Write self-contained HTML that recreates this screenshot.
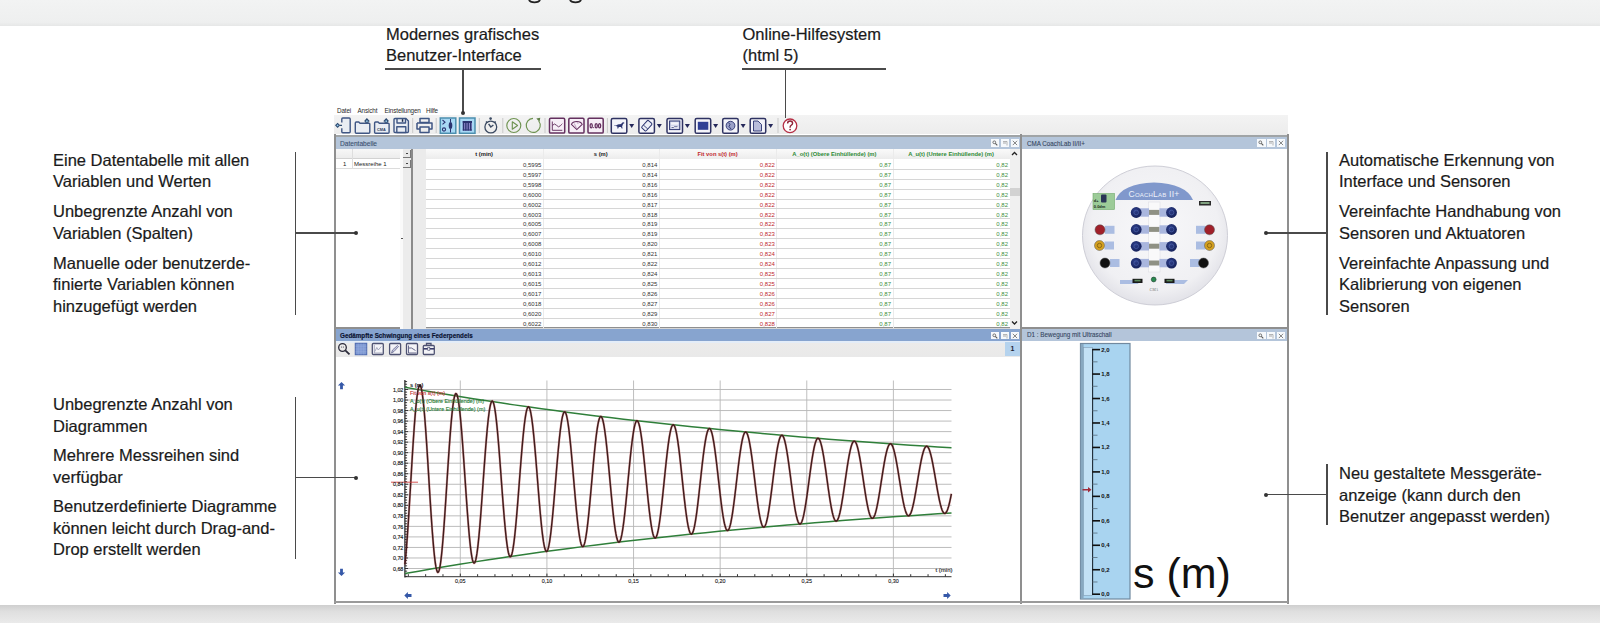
<!DOCTYPE html>
<html><head><meta charset="utf-8"><style>
*{margin:0;padding:0;box-sizing:border-box}
html,body{width:1600px;height:623px;overflow:hidden;background:#fff;font-family:"Liberation Sans", sans-serif}
.a{position:absolute}
.t{position:absolute;white-space:nowrap;font-size:16.5px;color:#1a1a1a;line-height:21.5px;-webkit-text-stroke:0.2px #1a1a1a}
.ln{position:absolute;background:#4a4a4a}
.dot{position:absolute;width:4px;height:4px;border-radius:2px;background:#333}
.s{position:absolute;white-space:nowrap;line-height:1}
</style></head><body>
<div class="a" style="left:0;top:0;width:1600px;height:26px;background:linear-gradient(#f2f3f3,#eeefef 85%,#e6e7e7)"></div><svg class="a" style="left:0;top:0" width="600" height="6"><path d="M529 0 Q530 2.3 534.5 2.3 Q539 2.3 540 0" fill="none" stroke="#222" stroke-width="1.8"/><path d="M570 0 Q571 2.3 575.5 2.3 Q580 2.3 581 0" fill="none" stroke="#222" stroke-width="1.8"/></svg><div class="a" style="left:0;top:604.5px;width:1600px;height:19px;background:linear-gradient(#cfcfcf,#dfdfdf 35%,#ebebeb)"></div><div class="t" style="left:53px;top:149.9px">Eine Datentabelle mit allen</div><div class="t" style="left:53px;top:171.4px">Variablen und Werten</div><div class="t" style="left:53px;top:201.2px">Unbegrenzte Anzahl von</div><div class="t" style="left:53px;top:222.7px">Variablen (Spalten)</div><div class="t" style="left:53px;top:252.6px">Manuelle oder benutzerde-</div><div class="t" style="left:53px;top:274.1px">finierte Variablen können</div><div class="t" style="left:53px;top:295.6px">hinzugefügt werden</div><div class="t" style="left:53px;top:394.2px">Unbegrenzte Anzahl von</div><div class="t" style="left:53px;top:415.7px">Diagrammen</div><div class="t" style="left:53px;top:445.4px">Mehrere Messreihen sind</div><div class="t" style="left:53px;top:466.9px">verfügbar</div><div class="t" style="left:53px;top:496.4px">Benutzerdefinierte Diagramme</div><div class="t" style="left:53px;top:517.9px">können leicht durch Drag-and-</div><div class="t" style="left:53px;top:539.4px">Drop erstellt werden</div><div class="t" style="left:1339px;top:149.9px">Automatische Erkennung von</div><div class="t" style="left:1339px;top:171.4px">Interface und Sensoren</div><div class="t" style="left:1339px;top:201.2px">Vereinfachte Handhabung von</div><div class="t" style="left:1339px;top:222.7px">Sensoren und Aktuatoren</div><div class="t" style="left:1339px;top:252.6px">Vereinfachte Anpassung und</div><div class="t" style="left:1339px;top:274.1px">Kalibrierung von eigenen</div><div class="t" style="left:1339px;top:295.6px">Sensoren</div><div class="t" style="left:1339px;top:463.2px">Neu gestaltete Messgeräte-</div><div class="t" style="left:1339px;top:484.7px">anzeige (kann durch den</div><div class="t" style="left:1339px;top:506.2px">Benutzer angepasst werden)</div><div class="t" style="left:386px;top:23.5px">Modernes grafisches</div><div class="t" style="left:386px;top:45.0px">Benutzer-Interface</div><div class="t" style="left:742.5px;top:23.5px">Online-Hilfesystem</div><div class="t" style="left:742.5px;top:45.0px">(html 5)</div>
<div class="s" style="left:337px;top:107.7px;font-size:6.3px;color:#2a2a2a;letter-spacing:-0.12px">Datei</div><div class="s" style="left:357.5px;top:107.7px;font-size:6.3px;color:#2a2a2a;letter-spacing:-0.12px">Ansicht</div><div class="s" style="left:384.5px;top:107.7px;font-size:6.3px;color:#2a2a2a;letter-spacing:-0.12px">Einstellungen</div><div class="s" style="left:426px;top:107.7px;font-size:6.3px;color:#2a2a2a;letter-spacing:-0.12px">Hilfe</div><div class="a" style="left:334px;top:115px;width:954px;height:20px;background:linear-gradient(#f3f3f3,#ececec);"></div><div class="a" style="left:334px;top:134px;width:688px;height:195px;background:#fff;"></div><div class="a" style="left:334px;top:134.5px;width:954px;height:2.3px;background:#a0a4a6;"></div><div class="a" style="left:334px;top:134px;width:2px;height:470px;background:#8f8f8f;"></div><div class="a" style="left:1020px;top:134px;width:2px;height:470px;background:#8f8f8f;"></div><div class="a" style="left:1286.5px;top:134px;width:2px;height:470px;background:#8f8f8f;"></div><div class="a" style="left:334px;top:327px;width:954px;height:2px;background:#8f8f8f;"></div><div class="a" style="left:334px;top:601.3px;width:954px;height:2.2px;background:#9a9a9a;"></div><div class="a" style="left:336px;top:137px;width:684px;height:11.5px;background:#b4c5da;"></div><div class="s" style="left:340px;top:140.5px;font-size:6.6px;color:#3a5070;-webkit-text-stroke:0.1px #3a5070">Datentabelle</div><div class="a" style="left:1022px;top:137px;width:264.5px;height:11.5px;background:#b4c5da;"></div><div class="s" style="left:1027px;top:140.5px;font-size:6.6px;color:#34465f;transform:scaleX(0.95);transform-origin:0 0;-webkit-text-stroke:0.1px #34465f">CMA CoachLab II/II+</div><div class="a" style="left:336px;top:329px;width:684px;height:11.5px;background:#87a4cf;"></div><div class="s" style="left:340px;top:332px;font-size:7px;color:#0a1230;font-weight:bold;-webkit-text-stroke:0.15px #0a1230;transform:scaleX(0.9);transform-origin:0 0">Gedämpfte Schwingung eines Federpendels</div><div class="a" style="left:1022px;top:329px;width:264.5px;height:11.5px;background:#b4c5da;"></div><div class="s" style="left:1026.5px;top:332px;font-size:6.8px;color:#34465f;transform:scaleX(0.93);transform-origin:0 0;-webkit-text-stroke:0.1px #34465f">D1 : Bewegung mit Ultraschall</div><div class="a" style="left:991px;top:139px;width:8.3px;height:7.8px;background:#f6f9fc;"></div><div class="a" style="left:1000.8px;top:139px;width:8.3px;height:7.8px;background:#f6f9fc;"></div><div class="a" style="left:1010.8px;top:139px;width:8.3px;height:7.8px;background:#f6f9fc;"></div><svg class="a" style="left:991px;top:139px" width="29" height="8" viewBox="0 0 29 8"><circle cx="3.3" cy="3.3" r="1.4" fill="none" stroke="#666" stroke-width="0.9"/><line x1="4.3" y1="4.3" x2="6.3" y2="6.3" stroke="#555" stroke-width="1.1"/><path d="M12 2.5 h4 v4" fill="none" stroke="#999" stroke-width="0.7"/><line x1="12" y1="4" x2="15" y2="4" stroke="#888" stroke-width="0.7"/><path d="M21.8 1.8 l4.3 4.3 M26.1 1.8 l-4.3 4.3" stroke="#777" stroke-width="0.9"/></svg><div class="a" style="left:1257.3px;top:139px;width:8.3px;height:7.8px;background:#f6f9fc;"></div><div class="a" style="left:1267.1px;top:139px;width:8.3px;height:7.8px;background:#f6f9fc;"></div><div class="a" style="left:1277.1px;top:139px;width:8.3px;height:7.8px;background:#f6f9fc;"></div><svg class="a" style="left:1257.3px;top:139px" width="29" height="8" viewBox="0 0 29 8"><circle cx="3.3" cy="3.3" r="1.4" fill="none" stroke="#666" stroke-width="0.9"/><line x1="4.3" y1="4.3" x2="6.3" y2="6.3" stroke="#555" stroke-width="1.1"/><path d="M12 2.5 h4 v4" fill="none" stroke="#999" stroke-width="0.7"/><line x1="12" y1="4" x2="15" y2="4" stroke="#888" stroke-width="0.7"/><path d="M21.8 1.8 l4.3 4.3 M26.1 1.8 l-4.3 4.3" stroke="#777" stroke-width="0.9"/></svg><div class="a" style="left:991px;top:331.5px;width:8.3px;height:7.8px;background:#f6f9fc;"></div><div class="a" style="left:1000.8px;top:331.5px;width:8.3px;height:7.8px;background:#f6f9fc;"></div><div class="a" style="left:1010.8px;top:331.5px;width:8.3px;height:7.8px;background:#f6f9fc;"></div><svg class="a" style="left:991px;top:331.5px" width="29" height="8" viewBox="0 0 29 8"><circle cx="3.3" cy="3.3" r="1.4" fill="none" stroke="#666" stroke-width="0.9"/><line x1="4.3" y1="4.3" x2="6.3" y2="6.3" stroke="#555" stroke-width="1.1"/><path d="M12 2.5 h4 v4" fill="none" stroke="#999" stroke-width="0.7"/><line x1="12" y1="4" x2="15" y2="4" stroke="#888" stroke-width="0.7"/><path d="M21.8 1.8 l4.3 4.3 M26.1 1.8 l-4.3 4.3" stroke="#777" stroke-width="0.9"/></svg><div class="a" style="left:1257.3px;top:331.5px;width:8.3px;height:7.8px;background:#f6f9fc;"></div><div class="a" style="left:1267.1px;top:331.5px;width:8.3px;height:7.8px;background:#f6f9fc;"></div><div class="a" style="left:1277.1px;top:331.5px;width:8.3px;height:7.8px;background:#f6f9fc;"></div><svg class="a" style="left:1257.3px;top:331.5px" width="29" height="8" viewBox="0 0 29 8"><circle cx="3.3" cy="3.3" r="1.4" fill="none" stroke="#666" stroke-width="0.9"/><line x1="4.3" y1="4.3" x2="6.3" y2="6.3" stroke="#555" stroke-width="1.1"/><path d="M12 2.5 h4 v4" fill="none" stroke="#999" stroke-width="0.7"/><line x1="12" y1="4" x2="15" y2="4" stroke="#888" stroke-width="0.7"/><path d="M21.8 1.8 l4.3 4.3 M26.1 1.8 l-4.3 4.3" stroke="#777" stroke-width="0.9"/></svg><div class="a" style="left:336px;top:148.5px;width:64.5px;height:10px;background:linear-gradient(#f7f7f7,#ebebeb);"></div><div class="a" style="left:336px;top:158.5px;width:64.5px;height:10px;background:#fff;"></div><div class="a" style="left:336px;top:168.3px;width:64.5px;height:0.8px;background:#dcdcdc;"></div><div class="a" style="left:336px;top:158.2px;width:64.5px;height:0.8px;background:#d2d2d2;"></div><div class="a" style="left:352.3px;top:148.5px;width:0.8px;height:20px;background:#dedede;"></div><div class="s" style="left:343px;top:160.8px;font-size:6px;color:#1a1a1a;">1</div><div class="s" style="left:354px;top:160.8px;font-size:6px;color:#1a1a1a;">Messreihe 1</div><div class="a" style="left:400.5px;top:148.5px;width:11px;height:180px;background:#ececec;"></div><div class="a" style="left:400.3px;top:148.5px;width:2.8px;height:180px;background:#fafafa;"></div><div class="a" style="left:403.2px;top:149.5px;width:7.5px;height:8.5px;background:#e8e8e8;border-right:1px solid #777;border-bottom:1px solid #777"></div><div class="a" style="left:403.2px;top:159.5px;width:7.5px;height:8.5px;background:#e8e8e8;border-right:1px solid #777;border-bottom:1px solid #777"></div><div class="a" style="left:405.8px;top:153.2px;width:2px;height:0.9px;background:#444;"></div><div class="a" style="left:405.8px;top:163.2px;width:2px;height:0.9px;background:#444;"></div><div class="a" style="left:411px;top:148.5px;width:1.8px;height:180px;background:#8a8a8a;"></div><div class="a" style="left:412.8px;top:148.5px;width:12.8px;height:180px;background:#ebebeb;"></div><div class="a" style="left:401px;top:237.5px;width:1.6px;height:1.6px;background:#555;"></div><div class="a" style="left:425.6px;top:148.5px;width:584px;height:10px;background:linear-gradient(#fafafa,#ececec);"></div><div class="s" style="left:384.2px;width:200px;text-align:center;top:152.3px;font-size:5.8px;color:#222;font-weight:bold">t (min)</div><div class="s" style="left:500.79999999999995px;width:200px;text-align:center;top:152.3px;font-size:5.8px;color:#222;font-weight:bold">s (m)</div><div class="s" style="left:617.55px;width:200px;text-align:center;top:152.3px;font-size:5.8px;color:#c0282d;font-weight:bold">Fit von s(t) (m)</div><div class="s" style="left:734.4px;width:200px;text-align:center;top:152.3px;font-size:5.8px;color:#2e8a35;font-weight:bold">A_o(t) (Obere Einhüllende) (m)</div><div class="s" style="left:851.0px;width:200px;text-align:center;top:152.3px;font-size:5.8px;color:#2e8a35;font-weight:bold">A_u(t) (Untere Einhüllende) (m)</div><div class="a" style="left:542.8px;top:148.5px;width:0.8px;height:180px;background:#ebebeb;"></div><div class="a" style="left:658.8px;top:148.5px;width:0.8px;height:180px;background:#ebebeb;"></div><div class="a" style="left:776.3px;top:148.5px;width:0.8px;height:180px;background:#ebebeb;"></div><div class="a" style="left:892.5px;top:148.5px;width:0.8px;height:180px;background:#ebebeb;"></div><div class="a" style="left:425.6px;top:168.7px;width:584px;height:0.9px;background:#d6d6d6;"></div><div class="s" style="right:1058.7px;top:161.8px;font-size:6px;color:#333;">0,5995</div><div class="s" style="right:942.7px;top:161.8px;font-size:6px;color:#333;">0,814</div><div class="s" style="right:825.2px;top:161.8px;font-size:6px;color:#c0282d;">0,822</div><div class="s" style="right:709.0px;top:161.8px;font-size:6px;color:#3d8f3d;">0,87</div><div class="s" style="right:592.0px;top:161.8px;font-size:6px;color:#3d8f3d;">0,82</div><div class="a" style="left:425.6px;top:178.64px;width:584px;height:0.9px;background:#d6d6d6;"></div><div class="s" style="right:1058.7px;top:171.74px;font-size:6px;color:#333;">0,5997</div><div class="s" style="right:942.7px;top:171.74px;font-size:6px;color:#333;">0,814</div><div class="s" style="right:825.2px;top:171.74px;font-size:6px;color:#c0282d;">0,822</div><div class="s" style="right:709.0px;top:171.74px;font-size:6px;color:#3d8f3d;">0,87</div><div class="s" style="right:592.0px;top:171.74px;font-size:6px;color:#3d8f3d;">0,82</div><div class="a" style="left:425.6px;top:188.57999999999998px;width:584px;height:0.9px;background:#d6d6d6;"></div><div class="s" style="right:1058.7px;top:181.68px;font-size:6px;color:#333;">0,5998</div><div class="s" style="right:942.7px;top:181.68px;font-size:6px;color:#333;">0,816</div><div class="s" style="right:825.2px;top:181.68px;font-size:6px;color:#c0282d;">0,822</div><div class="s" style="right:709.0px;top:181.68px;font-size:6px;color:#3d8f3d;">0,87</div><div class="s" style="right:592.0px;top:181.68px;font-size:6px;color:#3d8f3d;">0,82</div><div class="a" style="left:425.6px;top:198.51999999999998px;width:584px;height:0.9px;background:#d6d6d6;"></div><div class="s" style="right:1058.7px;top:191.62px;font-size:6px;color:#333;">0,6000</div><div class="s" style="right:942.7px;top:191.62px;font-size:6px;color:#333;">0,816</div><div class="s" style="right:825.2px;top:191.62px;font-size:6px;color:#c0282d;">0,822</div><div class="s" style="right:709.0px;top:191.62px;font-size:6px;color:#3d8f3d;">0,87</div><div class="s" style="right:592.0px;top:191.62px;font-size:6px;color:#3d8f3d;">0,82</div><div class="a" style="left:425.6px;top:208.45999999999998px;width:584px;height:0.9px;background:#d6d6d6;"></div><div class="s" style="right:1058.7px;top:201.56px;font-size:6px;color:#333;">0,6002</div><div class="s" style="right:942.7px;top:201.56px;font-size:6px;color:#333;">0,817</div><div class="s" style="right:825.2px;top:201.56px;font-size:6px;color:#c0282d;">0,822</div><div class="s" style="right:709.0px;top:201.56px;font-size:6px;color:#3d8f3d;">0,87</div><div class="s" style="right:592.0px;top:201.56px;font-size:6px;color:#3d8f3d;">0,82</div><div class="a" style="left:425.6px;top:218.39999999999998px;width:584px;height:0.9px;background:#d6d6d6;"></div><div class="s" style="right:1058.7px;top:211.5px;font-size:6px;color:#333;">0,6003</div><div class="s" style="right:942.7px;top:211.5px;font-size:6px;color:#333;">0,818</div><div class="s" style="right:825.2px;top:211.5px;font-size:6px;color:#c0282d;">0,822</div><div class="s" style="right:709.0px;top:211.5px;font-size:6px;color:#3d8f3d;">0,87</div><div class="s" style="right:592.0px;top:211.5px;font-size:6px;color:#3d8f3d;">0,82</div><div class="a" style="left:425.6px;top:228.33999999999997px;width:584px;height:0.9px;background:#d6d6d6;"></div><div class="s" style="right:1058.7px;top:221.44px;font-size:6px;color:#333;">0,6005</div><div class="s" style="right:942.7px;top:221.44px;font-size:6px;color:#333;">0,819</div><div class="s" style="right:825.2px;top:221.44px;font-size:6px;color:#c0282d;">0,822</div><div class="s" style="right:709.0px;top:221.44px;font-size:6px;color:#3d8f3d;">0,87</div><div class="s" style="right:592.0px;top:221.44px;font-size:6px;color:#3d8f3d;">0,82</div><div class="a" style="left:425.6px;top:238.27999999999997px;width:584px;height:0.9px;background:#d6d6d6;"></div><div class="s" style="right:1058.7px;top:231.38px;font-size:6px;color:#333;">0,6007</div><div class="s" style="right:942.7px;top:231.38px;font-size:6px;color:#333;">0,819</div><div class="s" style="right:825.2px;top:231.38px;font-size:6px;color:#c0282d;">0,823</div><div class="s" style="right:709.0px;top:231.38px;font-size:6px;color:#3d8f3d;">0,87</div><div class="s" style="right:592.0px;top:231.38px;font-size:6px;color:#3d8f3d;">0,82</div><div class="a" style="left:425.6px;top:248.21999999999997px;width:584px;height:0.9px;background:#d6d6d6;"></div><div class="s" style="right:1058.7px;top:241.32px;font-size:6px;color:#333;">0,6008</div><div class="s" style="right:942.7px;top:241.32px;font-size:6px;color:#333;">0,820</div><div class="s" style="right:825.2px;top:241.32px;font-size:6px;color:#c0282d;">0,823</div><div class="s" style="right:709.0px;top:241.32px;font-size:6px;color:#3d8f3d;">0,87</div><div class="s" style="right:592.0px;top:241.32px;font-size:6px;color:#3d8f3d;">0,82</div><div class="a" style="left:425.6px;top:258.15999999999997px;width:584px;height:0.9px;background:#d6d6d6;"></div><div class="s" style="right:1058.7px;top:251.26px;font-size:6px;color:#333;">0,6010</div><div class="s" style="right:942.7px;top:251.26px;font-size:6px;color:#333;">0,821</div><div class="s" style="right:825.2px;top:251.26px;font-size:6px;color:#c0282d;">0,824</div><div class="s" style="right:709.0px;top:251.26px;font-size:6px;color:#3d8f3d;">0,87</div><div class="s" style="right:592.0px;top:251.26px;font-size:6px;color:#3d8f3d;">0,82</div><div class="a" style="left:425.6px;top:268.09999999999997px;width:584px;height:0.9px;background:#d6d6d6;"></div><div class="s" style="right:1058.7px;top:261.2px;font-size:6px;color:#333;">0,6012</div><div class="s" style="right:942.7px;top:261.2px;font-size:6px;color:#333;">0,822</div><div class="s" style="right:825.2px;top:261.2px;font-size:6px;color:#c0282d;">0,824</div><div class="s" style="right:709.0px;top:261.2px;font-size:6px;color:#3d8f3d;">0,87</div><div class="s" style="right:592.0px;top:261.2px;font-size:6px;color:#3d8f3d;">0,82</div><div class="a" style="left:425.6px;top:278.03999999999996px;width:584px;height:0.9px;background:#d6d6d6;"></div><div class="s" style="right:1058.7px;top:271.14px;font-size:6px;color:#333;">0,6013</div><div class="s" style="right:942.7px;top:271.14px;font-size:6px;color:#333;">0,824</div><div class="s" style="right:825.2px;top:271.14px;font-size:6px;color:#c0282d;">0,825</div><div class="s" style="right:709.0px;top:271.14px;font-size:6px;color:#3d8f3d;">0,87</div><div class="s" style="right:592.0px;top:271.14px;font-size:6px;color:#3d8f3d;">0,82</div><div class="a" style="left:425.6px;top:287.97999999999996px;width:584px;height:0.9px;background:#d6d6d6;"></div><div class="s" style="right:1058.7px;top:281.08px;font-size:6px;color:#333;">0,6015</div><div class="s" style="right:942.7px;top:281.08px;font-size:6px;color:#333;">0,825</div><div class="s" style="right:825.2px;top:281.08px;font-size:6px;color:#c0282d;">0,825</div><div class="s" style="right:709.0px;top:281.08px;font-size:6px;color:#3d8f3d;">0,87</div><div class="s" style="right:592.0px;top:281.08px;font-size:6px;color:#3d8f3d;">0,82</div><div class="a" style="left:425.6px;top:297.92px;width:584px;height:0.9px;background:#d6d6d6;"></div><div class="s" style="right:1058.7px;top:291.02000000000004px;font-size:6px;color:#333;">0,6017</div><div class="s" style="right:942.7px;top:291.02000000000004px;font-size:6px;color:#333;">0,826</div><div class="s" style="right:825.2px;top:291.02000000000004px;font-size:6px;color:#c0282d;">0,826</div><div class="s" style="right:709.0px;top:291.02000000000004px;font-size:6px;color:#3d8f3d;">0,87</div><div class="s" style="right:592.0px;top:291.02000000000004px;font-size:6px;color:#3d8f3d;">0,82</div><div class="a" style="left:425.6px;top:307.85999999999996px;width:584px;height:0.9px;background:#d6d6d6;"></div><div class="s" style="right:1058.7px;top:300.96px;font-size:6px;color:#333;">0,6018</div><div class="s" style="right:942.7px;top:300.96px;font-size:6px;color:#333;">0,827</div><div class="s" style="right:825.2px;top:300.96px;font-size:6px;color:#c0282d;">0,826</div><div class="s" style="right:709.0px;top:300.96px;font-size:6px;color:#3d8f3d;">0,87</div><div class="s" style="right:592.0px;top:300.96px;font-size:6px;color:#3d8f3d;">0,82</div><div class="a" style="left:425.6px;top:317.8px;width:584px;height:0.9px;background:#d6d6d6;"></div><div class="s" style="right:1058.7px;top:310.90000000000003px;font-size:6px;color:#333;">0,6020</div><div class="s" style="right:942.7px;top:310.90000000000003px;font-size:6px;color:#333;">0,829</div><div class="s" style="right:825.2px;top:310.90000000000003px;font-size:6px;color:#c0282d;">0,827</div><div class="s" style="right:709.0px;top:310.90000000000003px;font-size:6px;color:#3d8f3d;">0,87</div><div class="s" style="right:592.0px;top:310.90000000000003px;font-size:6px;color:#3d8f3d;">0,82</div><div class="a" style="left:425.6px;top:327.73999999999995px;width:584px;height:0.9px;background:#d6d6d6;"></div><div class="s" style="right:1058.7px;top:320.84px;font-size:6px;color:#333;">0,6022</div><div class="s" style="right:942.7px;top:320.84px;font-size:6px;color:#333;">0,830</div><div class="s" style="right:825.2px;top:320.84px;font-size:6px;color:#c0282d;">0,828</div><div class="s" style="right:709.0px;top:320.84px;font-size:6px;color:#3d8f3d;">0,87</div><div class="s" style="right:592.0px;top:320.84px;font-size:6px;color:#3d8f3d;">0,82</div><div class="a" style="left:1009.5px;top:148.5px;width:10.5px;height:180px;background:#f0f0f0;"></div><div class="a" style="left:1009.5px;top:188px;width:10.5px;height:7.5px;background:#d2d2d2;"></div><svg class="a" style="left:1009px;top:148px" width="12" height="182" viewBox="0 0 12 182"><path d="M3 7 l2.5 -2.5 l2.5 2.5" fill="none" stroke="#222" stroke-width="1.3"/><path d="M3 173.5 l2.5 2.5 l2.5 -2.5" fill="none" stroke="#222" stroke-width="1.3"/></svg><div class="a" style="left:336px;top:340.5px;width:684px;height:16.3px;background:linear-gradient(#e4edf8 0,#e4edf8 1.5px,#ecebea 2px,#e9e9e9)"></div><div class="a" style="left:1005px;top:342px;width:14.5px;height:14px;background:#b5d3ee"></div><div class="s" style="left:1010.5px;top:345px;font-size:7px;color:#223;font-weight:bold">1</div><svg class="a" style="left:0;top:0" width="1600" height="623" viewBox="0 0 1600 623"><g fill="none" stroke="#4e5272" stroke-width="1.3"><circle cx="342.5" cy="347.5" r="3.8" stroke="#2a2a3a"/><line x1="345.3" y1="350.3" x2="349.5" y2="354.3" stroke-width="1.8" stroke="#2a2a3a"/><circle cx="341.6" cy="347" r="0.5" fill="#2a2a3a" stroke="none"/><circle cx="343.4" cy="347" r="0.5" fill="#2a2a3a" stroke="none"/><rect x="355.3" y="343.3" width="11.4" height="11.4" fill="#7e98d2" stroke="#4f6cb0" stroke-width="1.1"/><path d="M358.2 343.5 v11 M361 343.5 v11 M363.8 343.5 v11 M355.5 346.2 h11 M355.5 349 h11 M355.5 351.8 h11" stroke="#98aee0" stroke-width="0.5"/><rect x="372.3" y="343.5" width="11" height="11" rx="1" fill="#f4f4f8"/><rect x="389.6" y="343.5" width="11" height="11" rx="1" fill="#f4f4f8"/><rect x="406.5" y="343.5" width="11" height="11" rx="1" fill="#f4f4f8"/><path d="M374.3 345 v8 h8.5 M374.8 351.5 l2 -4 l1.5 2.5 l3 -3.5" stroke-width="0.7" stroke="#8a8ca8"/><path d="M391.5 353 l1 -3 l5 -4.5 l1 1 l-4.5 5 z" stroke-width="0.8" stroke="#6a6c90" fill="#c8cae0"/><path d="M408.5 345.5 v7.5 h8 M409 348 h2.5 l4 2.5" stroke-width="0.9" stroke="#5a5c80"/><rect x="423.3" y="345.5" width="11" height="9" rx="1" fill="#f4f4f8"/><path d="M426.5 345.5 v-2 h4.5 v2" /><line x1="423.3" y1="348.8" x2="434.3" y2="348.8" stroke-width="1.6" stroke="#3a3c6a"/><rect x="427.8" y="347.5" width="2" height="3" fill="#f4f4f8" stroke-width="0.6"/></g><path d="M341.5 382 l-3.6 3.6 h2.2 v3.6 h2.8 v-3.6 h2.2 z" fill="#3558a8"/><path d="M341.5 576 l-3.6 -3.6 h2.2 v-3.6 h2.8 v3.6 h2.2 z" fill="#3558a8"/><path d="M404.3 595.5 l3.6 -3.6 v2.2 h3.6 v2.8 h-3.6 v2.2 z" fill="#3558a8"/><path d="M950.7 595.5 l-3.6 -3.6 v2.2 h-3.6 v2.8 h3.6 v2.2 z" fill="#3558a8"/><line x1="404.9" y1="568.50" x2="951.5" y2="568.50" stroke="#bcbcbc" stroke-width="1"/><line x1="404.9" y1="557.97" x2="951.5" y2="557.97" stroke="#bcbcbc" stroke-width="1"/><line x1="404.9" y1="547.44" x2="951.5" y2="547.44" stroke="#bcbcbc" stroke-width="1"/><line x1="404.9" y1="536.91" x2="951.5" y2="536.91" stroke="#bcbcbc" stroke-width="1"/><line x1="404.9" y1="526.38" x2="951.5" y2="526.38" stroke="#bcbcbc" stroke-width="1"/><line x1="404.9" y1="515.85" x2="951.5" y2="515.85" stroke="#bcbcbc" stroke-width="1"/><line x1="404.9" y1="505.32" x2="951.5" y2="505.32" stroke="#bcbcbc" stroke-width="1"/><line x1="404.9" y1="494.79" x2="951.5" y2="494.79" stroke="#bcbcbc" stroke-width="1"/><line x1="404.9" y1="484.26" x2="951.5" y2="484.26" stroke="#bcbcbc" stroke-width="1"/><line x1="404.9" y1="473.73" x2="951.5" y2="473.73" stroke="#bcbcbc" stroke-width="1"/><line x1="404.9" y1="463.20" x2="951.5" y2="463.20" stroke="#bcbcbc" stroke-width="1"/><line x1="404.9" y1="452.67" x2="951.5" y2="452.67" stroke="#bcbcbc" stroke-width="1"/><line x1="404.9" y1="442.14" x2="951.5" y2="442.14" stroke="#bcbcbc" stroke-width="1"/><line x1="404.9" y1="431.61" x2="951.5" y2="431.61" stroke="#bcbcbc" stroke-width="1"/><line x1="404.9" y1="421.08" x2="951.5" y2="421.08" stroke="#bcbcbc" stroke-width="1"/><line x1="404.9" y1="410.55" x2="951.5" y2="410.55" stroke="#bcbcbc" stroke-width="1"/><line x1="404.9" y1="400.02" x2="951.5" y2="400.02" stroke="#bcbcbc" stroke-width="1"/><line x1="404.9" y1="389.49" x2="951.5" y2="389.49" stroke="#bcbcbc" stroke-width="1"/><line x1="460.30" y1="380.5" x2="460.30" y2="576.6" stroke="#b8b8b8" stroke-width="0.9"/><line x1="546.92" y1="380.5" x2="546.92" y2="576.6" stroke="#b8b8b8" stroke-width="0.9"/><line x1="633.54" y1="380.5" x2="633.54" y2="576.6" stroke="#b8b8b8" stroke-width="0.9"/><line x1="720.16" y1="380.5" x2="720.16" y2="576.6" stroke="#b8b8b8" stroke-width="0.9"/><line x1="806.78" y1="380.5" x2="806.78" y2="576.6" stroke="#b8b8b8" stroke-width="0.9"/><line x1="893.40" y1="380.5" x2="893.40" y2="576.6" stroke="#b8b8b8" stroke-width="0.9"/><line x1="404.9" y1="380" x2="404.9" y2="577.6" stroke="#222" stroke-width="1.2"/><line x1="404.9" y1="576.6" x2="951.5" y2="576.6" stroke="#5a5a5a" stroke-width="1.3"/><line x1="404.9" y1="576.40" x2="407.1" y2="576.40" stroke="#222" stroke-width="0.9"/><line x1="404.9" y1="573.76" x2="407.1" y2="573.76" stroke="#222" stroke-width="0.9"/><line x1="404.9" y1="571.13" x2="407.1" y2="571.13" stroke="#222" stroke-width="0.9"/><line x1="404.9" y1="568.50" x2="408.1" y2="568.50" stroke="#222" stroke-width="0.9"/><line x1="404.9" y1="565.87" x2="407.1" y2="565.87" stroke="#222" stroke-width="0.9"/><line x1="404.9" y1="563.24" x2="407.1" y2="563.24" stroke="#222" stroke-width="0.9"/><line x1="404.9" y1="560.60" x2="407.1" y2="560.60" stroke="#222" stroke-width="0.9"/><line x1="404.9" y1="557.97" x2="408.1" y2="557.97" stroke="#222" stroke-width="0.9"/><line x1="404.9" y1="555.34" x2="407.1" y2="555.34" stroke="#222" stroke-width="0.9"/><line x1="404.9" y1="552.71" x2="407.1" y2="552.71" stroke="#222" stroke-width="0.9"/><line x1="404.9" y1="550.07" x2="407.1" y2="550.07" stroke="#222" stroke-width="0.9"/><line x1="404.9" y1="547.44" x2="408.1" y2="547.44" stroke="#222" stroke-width="0.9"/><line x1="404.9" y1="544.81" x2="407.1" y2="544.81" stroke="#222" stroke-width="0.9"/><line x1="404.9" y1="542.17" x2="407.1" y2="542.17" stroke="#222" stroke-width="0.9"/><line x1="404.9" y1="539.54" x2="407.1" y2="539.54" stroke="#222" stroke-width="0.9"/><line x1="404.9" y1="536.91" x2="408.1" y2="536.91" stroke="#222" stroke-width="0.9"/><line x1="404.9" y1="534.28" x2="407.1" y2="534.28" stroke="#222" stroke-width="0.9"/><line x1="404.9" y1="531.64" x2="407.1" y2="531.64" stroke="#222" stroke-width="0.9"/><line x1="404.9" y1="529.01" x2="407.1" y2="529.01" stroke="#222" stroke-width="0.9"/><line x1="404.9" y1="526.38" x2="408.1" y2="526.38" stroke="#222" stroke-width="0.9"/><line x1="404.9" y1="523.75" x2="407.1" y2="523.75" stroke="#222" stroke-width="0.9"/><line x1="404.9" y1="521.12" x2="407.1" y2="521.12" stroke="#222" stroke-width="0.9"/><line x1="404.9" y1="518.48" x2="407.1" y2="518.48" stroke="#222" stroke-width="0.9"/><line x1="404.9" y1="515.85" x2="408.1" y2="515.85" stroke="#222" stroke-width="0.9"/><line x1="404.9" y1="513.22" x2="407.1" y2="513.22" stroke="#222" stroke-width="0.9"/><line x1="404.9" y1="510.58" x2="407.1" y2="510.58" stroke="#222" stroke-width="0.9"/><line x1="404.9" y1="507.95" x2="407.1" y2="507.95" stroke="#222" stroke-width="0.9"/><line x1="404.9" y1="505.32" x2="408.1" y2="505.32" stroke="#222" stroke-width="0.9"/><line x1="404.9" y1="502.69" x2="407.1" y2="502.69" stroke="#222" stroke-width="0.9"/><line x1="404.9" y1="500.05" x2="407.1" y2="500.05" stroke="#222" stroke-width="0.9"/><line x1="404.9" y1="497.42" x2="407.1" y2="497.42" stroke="#222" stroke-width="0.9"/><line x1="404.9" y1="494.79" x2="408.1" y2="494.79" stroke="#222" stroke-width="0.9"/><line x1="404.9" y1="492.16" x2="407.1" y2="492.16" stroke="#222" stroke-width="0.9"/><line x1="404.9" y1="489.52" x2="407.1" y2="489.52" stroke="#222" stroke-width="0.9"/><line x1="404.9" y1="486.89" x2="407.1" y2="486.89" stroke="#222" stroke-width="0.9"/><line x1="404.9" y1="484.26" x2="408.1" y2="484.26" stroke="#222" stroke-width="0.9"/><line x1="404.9" y1="481.63" x2="407.1" y2="481.63" stroke="#222" stroke-width="0.9"/><line x1="404.9" y1="478.99" x2="407.1" y2="478.99" stroke="#222" stroke-width="0.9"/><line x1="404.9" y1="476.36" x2="407.1" y2="476.36" stroke="#222" stroke-width="0.9"/><line x1="404.9" y1="473.73" x2="408.1" y2="473.73" stroke="#222" stroke-width="0.9"/><line x1="404.9" y1="471.10" x2="407.1" y2="471.10" stroke="#222" stroke-width="0.9"/><line x1="404.9" y1="468.46" x2="407.1" y2="468.46" stroke="#222" stroke-width="0.9"/><line x1="404.9" y1="465.83" x2="407.1" y2="465.83" stroke="#222" stroke-width="0.9"/><line x1="404.9" y1="463.20" x2="408.1" y2="463.20" stroke="#222" stroke-width="0.9"/><line x1="404.9" y1="460.57" x2="407.1" y2="460.57" stroke="#222" stroke-width="0.9"/><line x1="404.9" y1="457.93" x2="407.1" y2="457.93" stroke="#222" stroke-width="0.9"/><line x1="404.9" y1="455.30" x2="407.1" y2="455.30" stroke="#222" stroke-width="0.9"/><line x1="404.9" y1="452.67" x2="408.1" y2="452.67" stroke="#222" stroke-width="0.9"/><line x1="404.9" y1="450.04" x2="407.1" y2="450.04" stroke="#222" stroke-width="0.9"/><line x1="404.9" y1="447.40" x2="407.1" y2="447.40" stroke="#222" stroke-width="0.9"/><line x1="404.9" y1="444.77" x2="407.1" y2="444.77" stroke="#222" stroke-width="0.9"/><line x1="404.9" y1="442.14" x2="408.1" y2="442.14" stroke="#222" stroke-width="0.9"/><line x1="404.9" y1="439.51" x2="407.1" y2="439.51" stroke="#222" stroke-width="0.9"/><line x1="404.9" y1="436.87" x2="407.1" y2="436.87" stroke="#222" stroke-width="0.9"/><line x1="404.9" y1="434.24" x2="407.1" y2="434.24" stroke="#222" stroke-width="0.9"/><line x1="404.9" y1="431.61" x2="408.1" y2="431.61" stroke="#222" stroke-width="0.9"/><line x1="404.9" y1="428.98" x2="407.1" y2="428.98" stroke="#222" stroke-width="0.9"/><line x1="404.9" y1="426.34" x2="407.1" y2="426.34" stroke="#222" stroke-width="0.9"/><line x1="404.9" y1="423.71" x2="407.1" y2="423.71" stroke="#222" stroke-width="0.9"/><line x1="404.9" y1="421.08" x2="408.1" y2="421.08" stroke="#222" stroke-width="0.9"/><line x1="404.9" y1="418.45" x2="407.1" y2="418.45" stroke="#222" stroke-width="0.9"/><line x1="404.9" y1="415.81" x2="407.1" y2="415.81" stroke="#222" stroke-width="0.9"/><line x1="404.9" y1="413.18" x2="407.1" y2="413.18" stroke="#222" stroke-width="0.9"/><line x1="404.9" y1="410.55" x2="408.1" y2="410.55" stroke="#222" stroke-width="0.9"/><line x1="404.9" y1="407.92" x2="407.1" y2="407.92" stroke="#222" stroke-width="0.9"/><line x1="404.9" y1="405.28" x2="407.1" y2="405.28" stroke="#222" stroke-width="0.9"/><line x1="404.9" y1="402.65" x2="407.1" y2="402.65" stroke="#222" stroke-width="0.9"/><line x1="404.9" y1="400.02" x2="408.1" y2="400.02" stroke="#222" stroke-width="0.9"/><line x1="404.9" y1="397.39" x2="407.1" y2="397.39" stroke="#222" stroke-width="0.9"/><line x1="404.9" y1="394.76" x2="407.1" y2="394.76" stroke="#222" stroke-width="0.9"/><line x1="404.9" y1="392.12" x2="407.1" y2="392.12" stroke="#222" stroke-width="0.9"/><line x1="404.9" y1="389.49" x2="408.1" y2="389.49" stroke="#222" stroke-width="0.9"/><line x1="404.9" y1="386.86" x2="407.1" y2="386.86" stroke="#222" stroke-width="0.9"/><line x1="404.9" y1="384.23" x2="407.1" y2="384.23" stroke="#222" stroke-width="0.9"/><line x1="404.9" y1="381.59" x2="407.1" y2="381.59" stroke="#222" stroke-width="0.9"/><line x1="408.33" y1="576.6" x2="408.33" y2="574.2" stroke="#333" stroke-width="1"/><line x1="425.65" y1="576.6" x2="425.65" y2="574.2" stroke="#333" stroke-width="1"/><line x1="442.98" y1="576.6" x2="442.98" y2="574.2" stroke="#333" stroke-width="1"/><line x1="460.30" y1="576.6" x2="460.30" y2="573.6" stroke="#333" stroke-width="1"/><line x1="477.62" y1="576.6" x2="477.62" y2="574.2" stroke="#333" stroke-width="1"/><line x1="494.95" y1="576.6" x2="494.95" y2="574.2" stroke="#333" stroke-width="1"/><line x1="512.27" y1="576.6" x2="512.27" y2="574.2" stroke="#333" stroke-width="1"/><line x1="529.60" y1="576.6" x2="529.60" y2="574.2" stroke="#333" stroke-width="1"/><line x1="546.92" y1="576.6" x2="546.92" y2="573.6" stroke="#333" stroke-width="1"/><line x1="564.24" y1="576.6" x2="564.24" y2="574.2" stroke="#333" stroke-width="1"/><line x1="581.57" y1="576.6" x2="581.57" y2="574.2" stroke="#333" stroke-width="1"/><line x1="598.89" y1="576.6" x2="598.89" y2="574.2" stroke="#333" stroke-width="1"/><line x1="616.22" y1="576.6" x2="616.22" y2="574.2" stroke="#333" stroke-width="1"/><line x1="633.54" y1="576.6" x2="633.54" y2="573.6" stroke="#333" stroke-width="1"/><line x1="650.86" y1="576.6" x2="650.86" y2="574.2" stroke="#333" stroke-width="1"/><line x1="668.19" y1="576.6" x2="668.19" y2="574.2" stroke="#333" stroke-width="1"/><line x1="685.51" y1="576.6" x2="685.51" y2="574.2" stroke="#333" stroke-width="1"/><line x1="702.84" y1="576.6" x2="702.84" y2="574.2" stroke="#333" stroke-width="1"/><line x1="720.16" y1="576.6" x2="720.16" y2="573.6" stroke="#333" stroke-width="1"/><line x1="737.48" y1="576.6" x2="737.48" y2="574.2" stroke="#333" stroke-width="1"/><line x1="754.81" y1="576.6" x2="754.81" y2="574.2" stroke="#333" stroke-width="1"/><line x1="772.13" y1="576.6" x2="772.13" y2="574.2" stroke="#333" stroke-width="1"/><line x1="789.46" y1="576.6" x2="789.46" y2="574.2" stroke="#333" stroke-width="1"/><line x1="806.78" y1="576.6" x2="806.78" y2="573.6" stroke="#333" stroke-width="1"/><line x1="824.10" y1="576.6" x2="824.10" y2="574.2" stroke="#333" stroke-width="1"/><line x1="841.43" y1="576.6" x2="841.43" y2="574.2" stroke="#333" stroke-width="1"/><line x1="858.75" y1="576.6" x2="858.75" y2="574.2" stroke="#333" stroke-width="1"/><line x1="876.08" y1="576.6" x2="876.08" y2="574.2" stroke="#333" stroke-width="1"/><line x1="893.40" y1="576.6" x2="893.40" y2="573.6" stroke="#333" stroke-width="1"/><line x1="910.72" y1="576.6" x2="910.72" y2="574.2" stroke="#333" stroke-width="1"/><line x1="928.05" y1="576.6" x2="928.05" y2="574.2" stroke="#333" stroke-width="1"/><line x1="945.37" y1="576.6" x2="945.37" y2="574.2" stroke="#333" stroke-width="1"/><polyline points="404.9,387.20 418.6,389.62 432.2,391.97 445.9,394.27 459.6,396.50 473.2,398.68 486.9,400.79 500.6,402.86 514.2,404.87 527.9,406.83 541.5,408.74 555.2,410.60 568.9,412.41 582.5,414.17 596.2,415.89 609.9,417.56 623.5,419.19 637.2,420.78 650.9,422.32 664.5,423.83 678.2,425.30 691.9,426.73 705.5,428.12 719.2,429.47 732.9,430.80 746.5,432.08 760.2,433.34 773.9,434.56 787.5,435.74 801.2,436.90 814.8,438.03 828.5,439.13 842.2,440.20 855.8,441.24 869.5,442.26 883.2,443.25 896.8,444.21 910.5,445.15 924.2,446.06 937.8,446.95 951.5,447.82" fill="none" stroke="#2f7f3a" stroke-width="1.5"/><polyline points="404.9,573.60 418.6,571.18 432.2,568.83 445.9,566.53 459.6,564.30 473.2,562.12 486.9,560.01 500.6,557.94 514.2,555.93 527.9,553.97 541.5,552.06 555.2,550.20 568.9,548.39 582.5,546.63 596.2,544.91 609.9,543.24 623.5,541.61 637.2,540.02 650.9,538.48 664.5,536.97 678.2,535.50 691.9,534.07 705.5,532.68 719.2,531.33 732.9,530.00 746.5,528.72 760.2,527.46 773.9,526.24 787.5,525.06 801.2,523.90 814.8,522.77 828.5,521.67 842.2,520.60 855.8,519.56 869.5,518.54 883.2,517.55 896.8,516.59 910.5,515.65 924.2,514.74 937.8,513.85 951.5,512.98" fill="none" stroke="#2f7f3a" stroke-width="1.5"/><path d="M404.90,564.30 L405.40,559.57 L405.90,554.25 L406.40,548.39 L406.90,542.03 L407.40,535.22 L407.90,528.01 L408.40,520.45 L408.90,512.60 L409.40,504.53 L409.90,496.29 L410.40,487.95 L410.90,479.56 L411.40,471.20 L411.90,462.92 L412.40,454.79 L412.90,446.86 L413.40,439.20 L413.90,431.87 L414.40,424.91 L414.90,418.39 L415.40,412.34 L415.90,406.81 L416.40,401.85 L416.90,397.49 L417.40,393.76 L417.90,390.69 L418.40,388.30 L418.90,386.61 L419.40,385.62 L419.90,385.35 L420.40,385.79 L420.90,386.95 L421.40,388.81 L421.90,391.35 L422.40,394.55 L422.90,398.40 L423.40,402.85 L423.90,407.89 L424.40,413.45 L424.90,419.51 L425.40,426.02 L425.90,432.92 L426.40,440.17 L426.90,447.71 L427.40,455.48 L427.90,463.42 L428.40,471.48 L428.90,479.59 L429.40,487.69 L429.90,495.72 L430.40,503.62 L430.90,511.33 L431.40,518.80 L431.90,525.96 L432.40,532.76 L432.90,539.16 L433.40,545.11 L433.90,550.56 L434.40,555.47 L434.90,559.81 L435.40,563.54 L435.90,566.64 L436.40,569.09 L436.90,570.86 L437.40,571.95 L437.90,572.36 L438.40,572.06 L438.90,571.08 L439.40,569.42 L439.90,567.10 L440.40,564.06 L440.90,560.38 L441.40,556.12 L441.90,551.31 L442.40,545.99 L442.90,540.19 L443.40,533.96 L443.90,527.36 L444.40,520.42 L444.90,513.21 L445.40,505.78 L445.90,498.18 L446.40,490.48 L446.90,482.73 L447.40,474.98 L447.90,467.30 L448.40,459.75 L448.90,452.38 L449.40,445.24 L449.90,438.38 L450.40,431.87 L450.90,425.74 L451.40,420.04 L451.90,414.81 L452.40,410.09 L452.90,405.91 L453.40,402.30 L453.90,399.30 L454.40,396.90 L454.90,395.15 L455.40,394.04 L455.90,393.58 L456.40,393.77 L456.90,394.61 L457.40,396.10 L457.90,398.21 L458.40,400.94 L458.90,404.25 L459.40,408.13 L459.90,412.54 L460.40,417.44 L460.90,422.80 L461.40,428.59 L461.90,434.74 L462.40,441.22 L462.90,447.98 L463.40,454.96 L463.90,462.12 L464.40,469.39 L464.90,476.73 L465.40,484.07 L465.90,491.37 L466.40,498.56 L466.90,505.60 L467.40,512.43 L467.90,519.01 L468.40,525.27 L468.90,531.19 L469.40,536.70 L469.90,541.78 L470.40,546.39 L470.90,550.49 L471.40,554.05 L471.90,557.05 L472.40,559.46 L472.90,561.28 L473.40,562.48 L473.90,563.07 L474.40,563.03 L474.90,562.37 L475.40,561.09 L475.90,559.22 L476.40,556.75 L476.90,553.72 L477.40,550.14 L477.90,546.05 L478.40,541.47 L478.90,536.45 L479.40,531.02 L479.90,525.22 L480.40,519.09 L480.90,512.69 L481.40,506.06 L481.90,499.26 L482.40,492.32 L482.90,485.32 L483.40,478.29 L483.90,471.30 L484.40,464.39 L484.90,457.62 L485.40,451.03 L485.90,444.68 L486.40,438.61 L486.90,432.87 L487.40,427.50 L487.90,422.54 L488.40,418.02 L488.90,413.99 L489.40,410.46 L489.90,407.46 L490.40,405.02 L490.90,403.16 L491.40,401.87 L491.90,401.18 L492.40,401.09 L492.90,401.60 L493.40,402.69 L493.90,404.37 L494.40,406.61 L494.90,409.41 L495.40,412.73 L495.90,416.55 L496.40,420.85 L496.90,425.58 L497.40,430.72 L497.90,436.22 L498.40,442.04 L498.90,448.13 L499.40,454.46 L499.90,460.96 L500.40,467.60 L500.90,474.32 L501.40,481.08 L501.90,487.81 L502.40,494.47 L502.90,501.01 L503.40,507.39 L503.90,513.55 L504.40,519.44 L504.90,525.03 L505.40,530.28 L505.90,535.13 L506.40,539.57 L506.90,543.55 L507.40,547.05 L507.90,550.04 L508.40,552.50 L508.90,554.41 L509.40,555.76 L509.90,556.55 L510.40,556.76 L510.90,556.39 L511.40,555.45 L511.90,553.96 L512.40,551.91 L512.90,549.33 L513.40,546.23 L513.90,542.65 L514.40,538.60 L514.90,534.13 L515.40,529.26 L515.90,524.03 L516.40,518.49 L516.90,512.67 L517.40,506.62 L517.90,500.39 L518.40,494.01 L518.90,487.55 L519.40,481.05 L519.90,474.56 L520.40,468.12 L520.90,461.79 L521.40,455.61 L521.90,449.63 L522.40,443.89 L522.90,438.44 L523.40,433.31 L523.90,428.55 L524.40,424.19 L524.90,420.26 L525.40,416.80 L525.90,413.81 L526.40,411.33 L526.90,409.38 L527.40,407.96 L527.90,407.10 L528.40,406.78 L528.90,407.02 L529.40,407.81 L529.90,409.15 L530.40,411.02 L530.90,413.40 L531.40,416.29 L531.90,419.65 L532.40,423.46 L532.90,427.69 L533.40,432.31 L533.90,437.29 L534.40,442.57 L534.90,448.13 L535.40,453.93 L535.90,459.91 L536.40,466.03 L536.90,472.25 L537.40,478.52 L537.90,484.79 L538.40,491.01 L538.90,497.14 L539.40,503.14 L539.90,508.95 L540.40,514.54 L540.90,519.85 L541.40,524.86 L541.90,529.53 L542.40,533.82 L542.90,537.70 L543.40,541.14 L543.90,544.11 L544.40,546.60 L544.90,548.59 L545.40,550.06 L545.90,551.01 L546.40,551.42 L546.90,551.30 L547.40,550.64 L547.90,549.46 L548.40,547.76 L548.90,545.55 L549.40,542.87 L549.90,539.71 L550.40,536.12 L550.90,532.11 L551.40,527.73 L551.90,522.99 L552.40,517.95 L552.90,512.63 L553.40,507.08 L553.90,501.35 L554.40,495.46 L554.90,489.47 L555.40,483.43 L555.90,477.37 L556.40,471.35 L556.90,465.41 L557.40,459.60 L557.90,453.95 L558.40,448.51 L558.90,443.32 L559.40,438.42 L559.90,433.85 L560.40,429.63 L560.90,425.81 L561.40,422.40 L561.90,419.44 L562.40,416.94 L562.90,414.92 L563.40,413.40 L563.90,412.38 L564.40,411.88 L564.90,411.89 L565.40,412.42 L565.90,413.46 L566.40,415.01 L566.90,417.04 L567.40,419.54 L567.90,422.50 L568.40,425.88 L568.90,429.67 L569.40,433.83 L569.90,438.34 L570.40,443.15 L570.90,448.23 L571.40,453.55 L571.90,459.06 L572.40,464.71 L572.90,470.48 L573.40,476.31 L573.90,482.15 L574.40,487.98 L574.90,493.73 L575.40,499.37 L575.90,504.86 L576.40,510.16 L576.90,515.22 L577.40,520.01 L577.90,524.49 L578.40,528.63 L578.90,532.40 L579.40,535.78 L579.90,538.73 L580.40,541.23 L580.90,543.27 L581.40,544.84 L581.90,545.92 L582.40,546.50 L582.90,546.59 L583.40,546.18 L583.90,545.27 L584.40,543.88 L584.90,542.01 L585.40,539.69 L585.90,536.92 L586.40,533.73 L586.90,530.15 L587.40,526.20 L587.90,521.91 L588.40,517.32 L588.90,512.46 L589.40,507.37 L589.90,502.09 L590.40,496.65 L590.90,491.10 L591.40,485.48 L591.90,479.84 L592.40,474.20 L592.90,468.63 L593.40,463.16 L593.90,457.82 L594.40,452.67 L594.90,447.73 L595.40,443.05 L595.90,438.66 L596.40,434.60 L596.90,430.88 L597.40,427.54 L597.90,424.61 L598.40,422.11 L598.90,420.04 L599.40,418.44 L599.90,417.30 L600.40,416.64 L600.90,416.46 L601.40,416.76 L601.90,417.54 L602.40,418.79 L602.90,420.50 L603.40,422.66 L603.90,425.25 L604.40,428.25 L604.90,431.64 L605.40,435.38 L605.90,439.46 L606.40,443.84 L606.90,448.48 L607.40,453.36 L607.90,458.42 L608.40,463.65 L608.90,468.99 L609.40,474.40 L609.90,479.85 L610.40,485.30 L610.90,490.70 L611.40,496.00 L611.90,501.19 L612.40,506.20 L612.90,511.01 L613.40,515.58 L613.90,519.88 L614.40,523.87 L614.90,527.53 L615.40,530.83 L615.90,533.74 L616.40,536.25 L616.90,538.33 L617.40,539.97 L617.90,541.16 L618.40,541.89 L618.90,542.15 L619.40,541.95 L619.90,541.29 L620.40,540.17 L620.90,538.61 L621.40,536.61 L621.90,534.19 L622.40,531.37 L622.90,528.17 L623.40,524.62 L623.90,520.75 L624.40,516.58 L624.90,512.14 L625.40,507.48 L625.90,502.62 L626.40,497.60 L626.90,492.46 L627.40,487.24 L627.90,481.98 L628.40,476.72 L628.90,471.49 L629.40,466.35 L629.90,461.32 L630.40,456.44 L630.90,451.75 L631.40,447.28 L631.90,443.08 L632.40,439.16 L632.90,435.56 L633.40,432.30 L633.90,429.42 L634.40,426.92 L634.90,424.82 L635.40,423.15 L635.90,421.92 L636.40,421.12 L636.90,420.78 L637.40,420.88 L637.90,421.43 L638.40,422.42 L638.90,423.85 L639.40,425.70 L639.90,427.95 L640.40,430.60 L640.90,433.62 L641.40,436.98 L641.90,440.66 L642.40,444.63 L642.90,448.87 L643.40,453.33 L643.90,457.99 L644.40,462.81 L644.90,467.75 L645.40,472.78 L645.90,477.86 L646.40,482.94 L646.90,488.00 L647.40,492.99 L647.90,497.87 L648.40,502.61 L648.90,507.18 L649.40,511.54 L649.90,515.65 L650.40,519.50 L650.90,523.04 L651.40,526.25 L651.90,529.11 L652.40,531.60 L652.90,533.70 L653.40,535.40 L653.90,536.68 L654.40,537.53 L654.90,537.95 L655.40,537.94 L655.90,537.49 L656.40,536.62 L656.90,535.33 L657.40,533.62 L657.90,531.52 L658.40,529.04 L658.90,526.19 L659.40,523.01 L659.90,519.51 L660.40,515.73 L660.90,511.69 L661.40,507.42 L661.90,502.95 L662.40,498.33 L662.90,493.58 L663.40,488.73 L663.90,483.84 L664.40,478.93 L664.90,474.04 L665.40,469.20 L665.90,464.46 L666.40,459.85 L666.90,455.40 L667.40,451.15 L667.90,447.13 L668.40,443.36 L668.90,439.88 L669.40,436.71 L669.90,433.88 L670.40,431.40 L670.90,429.30 L671.40,427.58 L671.90,426.26 L672.40,425.36 L672.90,424.87 L673.40,424.79 L673.90,425.14 L674.40,425.90 L674.90,427.07 L675.40,428.64 L675.90,430.59 L676.40,432.92 L676.90,435.60 L677.40,438.61 L677.90,441.92 L678.40,445.53 L678.90,449.38 L679.40,453.46 L679.90,457.74 L680.40,462.18 L680.90,466.75 L681.40,471.41 L681.90,476.13 L682.40,480.87 L682.90,485.61 L683.40,490.29 L683.90,494.89 L684.40,499.37 L684.90,503.70 L685.40,507.84 L685.90,511.78 L686.40,515.47 L686.90,518.88 L687.40,522.00 L687.90,524.81 L688.40,527.27 L688.90,529.38 L689.40,531.11 L689.90,532.46 L690.40,533.42 L690.90,533.97 L691.40,534.12 L691.90,533.87 L692.40,533.21 L692.90,532.16 L693.40,530.72 L693.90,528.91 L694.40,526.73 L694.90,524.21 L695.40,521.37 L695.90,518.22 L696.40,514.80 L696.90,511.12 L697.40,507.22 L697.90,503.12 L698.40,498.86 L698.90,494.47 L699.40,489.99 L699.90,485.44 L700.40,480.86 L700.90,476.28 L701.40,471.75 L701.90,467.29 L702.40,462.94 L702.90,458.72 L703.40,454.68 L703.90,450.84 L704.40,447.23 L704.90,443.87 L705.40,440.80 L705.90,438.03 L706.40,435.58 L706.90,433.48 L707.40,431.73 L707.90,430.35 L708.40,429.35 L708.90,428.74 L709.40,428.51 L709.90,428.68 L710.40,429.24 L710.90,430.18 L711.40,431.49 L711.90,433.17 L712.40,435.20 L712.90,437.57 L713.40,440.26 L713.90,443.24 L714.40,446.50 L714.90,450.00 L715.40,453.73 L715.90,457.65 L716.40,461.73 L716.90,465.95 L717.40,470.27 L717.90,474.65 L718.40,479.07 L718.90,483.49 L719.40,487.88 L719.90,492.21 L720.40,496.44 L720.90,500.53 L721.40,504.47 L721.90,508.23 L722.40,511.76 L722.90,515.05 L723.40,518.08 L723.90,520.81 L724.40,523.24 L724.90,525.34 L725.40,527.10 L725.90,528.50 L726.40,529.54 L726.90,530.21 L727.40,530.50 L727.90,530.41 L728.40,529.95 L728.90,529.12 L729.40,527.92 L729.90,526.36 L730.40,524.47 L730.90,522.25 L731.40,519.71 L731.90,516.89 L732.40,513.79 L732.90,510.45 L733.40,506.89 L733.90,503.14 L734.40,499.23 L734.90,495.18 L735.40,491.03 L735.90,486.80 L736.40,482.54 L736.90,478.26 L737.40,474.02 L737.90,469.82 L738.40,465.72 L738.90,461.73 L739.40,457.90 L739.90,454.24 L740.40,450.78 L740.90,447.55 L741.40,444.57 L741.90,441.88 L742.40,439.47 L742.90,437.38 L743.40,435.61 L743.90,434.19 L744.40,433.11 L744.90,432.40 L745.40,432.04 L745.90,432.05 L746.40,432.43 L746.90,433.16 L747.40,434.25 L747.90,435.68 L748.40,437.45 L748.90,439.53 L749.40,441.92 L749.90,444.60 L750.40,447.53 L750.90,450.71 L751.40,454.11 L751.90,457.70 L752.40,461.45 L752.90,465.34 L753.40,469.33 L753.90,473.40 L754.40,477.51 L754.90,481.64 L755.40,485.75 L755.90,489.81 L756.40,493.79 L756.90,497.67 L757.40,501.40 L757.90,504.98 L758.40,508.36 L758.90,511.52 L759.40,514.45 L759.90,517.11 L760.40,519.49 L760.90,521.57 L761.40,523.34 L761.90,524.78 L762.40,525.89 L762.90,526.65 L763.40,527.06 L763.90,527.12 L764.40,526.83 L764.90,526.19 L765.40,525.21 L765.90,523.89 L766.40,522.25 L766.90,520.30 L767.40,518.05 L767.90,515.52 L768.40,512.73 L768.90,509.70 L769.40,506.46 L769.90,503.03 L770.40,499.44 L770.90,495.71 L771.40,491.87 L771.90,487.95 L772.40,483.99 L772.90,480.00 L773.40,476.03 L773.90,472.09 L774.40,468.23 L774.90,464.46 L775.40,460.82 L775.90,457.34 L776.40,454.04 L776.90,450.94 L777.40,448.06 L777.90,445.44 L778.40,443.09 L778.90,441.02 L779.40,439.25 L779.90,437.79 L780.40,436.65 L780.90,435.85 L781.40,435.39 L781.90,435.26 L782.40,435.47 L782.90,436.02 L783.40,436.91 L783.90,438.12 L784.40,439.64 L784.90,441.47 L785.40,443.58 L785.90,445.97 L786.40,448.62 L786.90,451.50 L787.40,454.59 L787.90,457.87 L788.40,461.31 L788.90,464.89 L789.40,468.57 L789.90,472.34 L790.40,476.17 L790.90,480.01 L791.40,483.86 L791.90,487.67 L792.40,491.42 L792.90,495.07 L793.40,498.62 L793.90,502.01 L794.40,505.24 L794.90,508.27 L795.40,511.09 L795.90,513.68 L796.40,516.00 L796.90,518.06 L797.40,519.83 L797.90,521.30 L798.40,522.46 L798.90,523.29 L799.40,523.81 L799.90,524.00 L800.40,523.86 L800.90,523.39 L801.40,522.60 L801.90,521.50 L802.40,520.08 L802.90,518.38 L803.40,516.39 L803.90,514.13 L804.40,511.62 L804.90,508.89 L805.40,505.94 L805.90,502.81 L806.40,499.52 L806.90,496.08 L807.40,492.54 L807.90,488.91 L808.40,485.23 L808.90,481.52 L809.40,477.80 L809.90,474.11 L810.40,470.48 L810.90,466.93 L811.40,463.48 L811.90,460.17 L812.40,457.02 L812.90,454.05 L813.40,451.28 L813.90,448.74 L814.40,446.44 L814.90,444.40 L815.40,442.64 L815.90,441.16 L816.40,439.98 L816.90,439.11 L817.40,438.55 L817.90,438.30 L818.40,438.38 L818.90,438.76 L819.40,439.46 L819.90,440.47 L820.40,441.78 L820.90,443.37 L821.40,445.24 L821.90,447.37 L822.40,449.74 L822.90,452.34 L823.40,455.15 L823.90,458.14 L824.40,461.29 L824.90,464.58 L825.40,467.98 L825.90,471.47 L826.40,475.02 L826.90,478.60 L827.40,482.19 L827.90,485.76 L828.40,489.29 L828.90,492.73 L829.40,496.08 L829.90,499.31 L830.40,502.39 L830.90,505.29 L831.40,508.00 L831.90,510.50 L832.40,512.77 L832.90,514.79 L833.40,516.55 L833.90,518.03 L834.40,519.23 L834.90,520.13 L835.40,520.74 L835.90,521.03 L836.40,521.02 L836.90,520.71 L837.40,520.09 L837.90,519.18 L838.40,517.98 L838.90,516.49 L839.40,514.74 L839.90,512.73 L840.40,510.49 L840.90,508.02 L841.40,505.35 L841.90,502.49 L842.40,499.48 L842.90,496.32 L843.40,493.06 L843.90,489.70 L844.40,486.28 L844.90,482.83 L845.40,479.36 L845.90,475.91 L846.40,472.49 L846.90,469.15 L847.40,465.89 L847.90,462.75 L848.40,459.75 L848.90,456.91 L849.40,454.25 L849.90,451.79 L850.40,449.56 L850.90,447.55 L851.40,445.81 L851.90,444.32 L852.40,443.11 L852.90,442.18 L853.40,441.54 L853.90,441.19 L854.40,441.14 L854.90,441.38 L855.40,441.92 L855.90,442.75 L856.40,443.85 L856.90,445.23 L857.40,446.88 L857.90,448.77 L858.40,450.89 L858.90,453.23 L859.40,455.78 L859.90,458.50 L860.40,461.38 L860.90,464.40 L861.40,467.54 L861.90,470.76 L862.40,474.05 L862.90,477.39 L863.40,480.73 L863.90,484.07 L864.40,487.38 L864.90,490.63 L865.40,493.79 L865.90,496.85 L866.40,499.78 L866.90,502.55 L867.40,505.16 L867.90,507.57 L868.40,509.78 L868.90,511.75 L869.40,513.49 L869.90,514.98 L870.40,516.21 L870.90,517.16 L871.40,517.83 L871.90,518.22 L872.40,518.33 L872.90,518.15 L873.40,517.69 L873.90,516.95 L874.40,515.93 L874.90,514.65 L875.40,513.11 L875.90,511.33 L876.40,509.33 L876.90,507.10 L877.40,504.69 L877.90,502.09 L878.40,499.34 L878.90,496.44 L879.40,493.44 L879.90,490.34 L880.40,487.17 L880.90,483.96 L881.40,480.72 L881.90,477.49 L882.40,474.29 L882.90,471.14 L883.40,468.07 L883.90,465.09 L884.40,462.24 L884.90,459.53 L885.40,456.98 L885.90,454.61 L886.40,452.44 L886.90,450.48 L887.40,448.76 L887.90,447.27 L888.40,446.04 L888.90,445.06 L889.40,444.36 L889.90,443.92 L890.40,443.77 L890.90,443.88 L891.40,444.28 L891.90,444.94 L892.40,445.87 L892.90,447.05 L893.40,448.49 L893.90,450.16 L894.40,452.06 L894.90,454.16 L895.40,456.46 L895.90,458.94 L896.40,461.57 L896.90,464.34 L897.40,467.22 L897.90,470.20 L898.40,473.25 L898.90,476.34 L899.40,479.46 L899.90,482.58 L900.40,485.68 L900.90,488.74 L901.40,491.72 L901.90,494.62 L902.40,497.40 L902.90,500.05 L903.40,502.54 L903.90,504.87 L904.40,507.00 L904.90,508.93 L905.40,510.65 L905.90,512.13 L906.40,513.37 L906.90,514.36 L907.40,515.09 L907.90,515.57 L908.40,515.77 L908.90,515.71 L909.40,515.39 L909.90,514.80 L910.40,513.95 L910.90,512.85 L911.40,511.51 L911.90,509.94 L912.40,508.16 L912.90,506.16 L913.40,503.98 L913.90,501.62 L914.40,499.11 L914.90,496.46 L915.40,493.69 L915.90,490.83 L916.40,487.90 L916.90,484.92 L917.40,481.91 L917.90,478.89 L918.40,475.89 L918.90,472.93 L919.40,470.04 L919.90,467.22 L920.40,464.51 L920.90,461.93 L921.40,459.49 L921.90,457.21 L922.40,455.11 L922.90,453.20 L923.40,451.50 L923.90,450.02 L924.40,448.78 L924.90,447.77 L925.40,447.01 L925.90,446.51 L926.40,446.26 L926.90,446.26 L927.40,446.53 L927.90,447.05 L928.40,447.81 L928.90,448.83 L929.40,450.07 L929.90,451.55 L930.40,453.23 L930.90,455.12 L931.40,457.19 L931.90,459.44 L932.40,461.84 L932.90,464.37 L933.40,467.02 L933.90,469.76 L934.40,472.58 L934.90,475.46 L935.40,478.36 L935.90,481.27 L936.40,484.18 L936.90,487.04 L937.40,489.86 L937.90,492.59 L938.40,495.23 L938.90,497.75 L939.40,500.14 L939.90,502.37 L940.40,504.44 L940.90,506.32 L941.40,508.00 L941.90,509.47 L942.40,510.72 L942.90,511.74 L943.40,512.52 L943.90,513.06 L944.40,513.35 L944.90,513.39 L945.40,513.18 L945.90,512.73 L946.40,512.04 L946.90,511.11 L947.40,509.95 L947.90,508.57 L948.40,506.98 L948.90,505.19 L949.40,503.23 L949.90,501.09 L950.40,498.80 L950.90,496.38 L951.40,493.84" fill="none" stroke="#c85050" stroke-width="2.3" opacity="0.45"/><path d="M404.90,564.30 L405.40,559.57 L405.90,554.25 L406.40,548.39 L406.90,542.03 L407.40,535.22 L407.90,528.01 L408.40,520.45 L408.90,512.60 L409.40,504.53 L409.90,496.29 L410.40,487.95 L410.90,479.56 L411.40,471.20 L411.90,462.92 L412.40,454.79 L412.90,446.86 L413.40,439.20 L413.90,431.87 L414.40,424.91 L414.90,418.39 L415.40,412.34 L415.90,406.81 L416.40,401.85 L416.90,397.49 L417.40,393.76 L417.90,390.69 L418.40,388.30 L418.90,386.61 L419.40,385.62 L419.90,385.35 L420.40,385.79 L420.90,386.95 L421.40,388.81 L421.90,391.35 L422.40,394.55 L422.90,398.40 L423.40,402.85 L423.90,407.89 L424.40,413.45 L424.90,419.51 L425.40,426.02 L425.90,432.92 L426.40,440.17 L426.90,447.71 L427.40,455.48 L427.90,463.42 L428.40,471.48 L428.90,479.59 L429.40,487.69 L429.90,495.72 L430.40,503.62 L430.90,511.33 L431.40,518.80 L431.90,525.96 L432.40,532.76 L432.90,539.16 L433.40,545.11 L433.90,550.56 L434.40,555.47 L434.90,559.81 L435.40,563.54 L435.90,566.64 L436.40,569.09 L436.90,570.86 L437.40,571.95 L437.90,572.36 L438.40,572.06 L438.90,571.08 L439.40,569.42 L439.90,567.10 L440.40,564.06 L440.90,560.38 L441.40,556.12 L441.90,551.31 L442.40,545.99 L442.90,540.19 L443.40,533.96 L443.90,527.36 L444.40,520.42 L444.90,513.21 L445.40,505.78 L445.90,498.18 L446.40,490.48 L446.90,482.73 L447.40,474.98 L447.90,467.30 L448.40,459.75 L448.90,452.38 L449.40,445.24 L449.90,438.38 L450.40,431.87 L450.90,425.74 L451.40,420.04 L451.90,414.81 L452.40,410.09 L452.90,405.91 L453.40,402.30 L453.90,399.30 L454.40,396.90 L454.90,395.15 L455.40,394.04 L455.90,393.58 L456.40,393.77 L456.90,394.61 L457.40,396.10 L457.90,398.21 L458.40,400.94 L458.90,404.25 L459.40,408.13 L459.90,412.54 L460.40,417.44 L460.90,422.80 L461.40,428.59 L461.90,434.74 L462.40,441.22 L462.90,447.98 L463.40,454.96 L463.90,462.12 L464.40,469.39 L464.90,476.73 L465.40,484.07 L465.90,491.37 L466.40,498.56 L466.90,505.60 L467.40,512.43 L467.90,519.01 L468.40,525.27 L468.90,531.19 L469.40,536.70 L469.90,541.78 L470.40,546.39 L470.90,550.49 L471.40,554.05 L471.90,557.05 L472.40,559.46 L472.90,561.28 L473.40,562.48 L473.90,563.07 L474.40,563.03 L474.90,562.37 L475.40,561.09 L475.90,559.22 L476.40,556.75 L476.90,553.72 L477.40,550.14 L477.90,546.05 L478.40,541.47 L478.90,536.45 L479.40,531.02 L479.90,525.22 L480.40,519.09 L480.90,512.69 L481.40,506.06 L481.90,499.26 L482.40,492.32 L482.90,485.32 L483.40,478.29 L483.90,471.30 L484.40,464.39 L484.90,457.62 L485.40,451.03 L485.90,444.68 L486.40,438.61 L486.90,432.87 L487.40,427.50 L487.90,422.54 L488.40,418.02 L488.90,413.99 L489.40,410.46 L489.90,407.46 L490.40,405.02 L490.90,403.16 L491.40,401.87 L491.90,401.18 L492.40,401.09 L492.90,401.60 L493.40,402.69 L493.90,404.37 L494.40,406.61 L494.90,409.41 L495.40,412.73 L495.90,416.55 L496.40,420.85 L496.90,425.58 L497.40,430.72 L497.90,436.22 L498.40,442.04 L498.90,448.13 L499.40,454.46 L499.90,460.96 L500.40,467.60 L500.90,474.32 L501.40,481.08 L501.90,487.81 L502.40,494.47 L502.90,501.01 L503.40,507.39 L503.90,513.55 L504.40,519.44 L504.90,525.03 L505.40,530.28 L505.90,535.13 L506.40,539.57 L506.90,543.55 L507.40,547.05 L507.90,550.04 L508.40,552.50 L508.90,554.41 L509.40,555.76 L509.90,556.55 L510.40,556.76 L510.90,556.39 L511.40,555.45 L511.90,553.96 L512.40,551.91 L512.90,549.33 L513.40,546.23 L513.90,542.65 L514.40,538.60 L514.90,534.13 L515.40,529.26 L515.90,524.03 L516.40,518.49 L516.90,512.67 L517.40,506.62 L517.90,500.39 L518.40,494.01 L518.90,487.55 L519.40,481.05 L519.90,474.56 L520.40,468.12 L520.90,461.79 L521.40,455.61 L521.90,449.63 L522.40,443.89 L522.90,438.44 L523.40,433.31 L523.90,428.55 L524.40,424.19 L524.90,420.26 L525.40,416.80 L525.90,413.81 L526.40,411.33 L526.90,409.38 L527.40,407.96 L527.90,407.10 L528.40,406.78 L528.90,407.02 L529.40,407.81 L529.90,409.15 L530.40,411.02 L530.90,413.40 L531.40,416.29 L531.90,419.65 L532.40,423.46 L532.90,427.69 L533.40,432.31 L533.90,437.29 L534.40,442.57 L534.90,448.13 L535.40,453.93 L535.90,459.91 L536.40,466.03 L536.90,472.25 L537.40,478.52 L537.90,484.79 L538.40,491.01 L538.90,497.14 L539.40,503.14 L539.90,508.95 L540.40,514.54 L540.90,519.85 L541.40,524.86 L541.90,529.53 L542.40,533.82 L542.90,537.70 L543.40,541.14 L543.90,544.11 L544.40,546.60 L544.90,548.59 L545.40,550.06 L545.90,551.01 L546.40,551.42 L546.90,551.30 L547.40,550.64 L547.90,549.46 L548.40,547.76 L548.90,545.55 L549.40,542.87 L549.90,539.71 L550.40,536.12 L550.90,532.11 L551.40,527.73 L551.90,522.99 L552.40,517.95 L552.90,512.63 L553.40,507.08 L553.90,501.35 L554.40,495.46 L554.90,489.47 L555.40,483.43 L555.90,477.37 L556.40,471.35 L556.90,465.41 L557.40,459.60 L557.90,453.95 L558.40,448.51 L558.90,443.32 L559.40,438.42 L559.90,433.85 L560.40,429.63 L560.90,425.81 L561.40,422.40 L561.90,419.44 L562.40,416.94 L562.90,414.92 L563.40,413.40 L563.90,412.38 L564.40,411.88 L564.90,411.89 L565.40,412.42 L565.90,413.46 L566.40,415.01 L566.90,417.04 L567.40,419.54 L567.90,422.50 L568.40,425.88 L568.90,429.67 L569.40,433.83 L569.90,438.34 L570.40,443.15 L570.90,448.23 L571.40,453.55 L571.90,459.06 L572.40,464.71 L572.90,470.48 L573.40,476.31 L573.90,482.15 L574.40,487.98 L574.90,493.73 L575.40,499.37 L575.90,504.86 L576.40,510.16 L576.90,515.22 L577.40,520.01 L577.90,524.49 L578.40,528.63 L578.90,532.40 L579.40,535.78 L579.90,538.73 L580.40,541.23 L580.90,543.27 L581.40,544.84 L581.90,545.92 L582.40,546.50 L582.90,546.59 L583.40,546.18 L583.90,545.27 L584.40,543.88 L584.90,542.01 L585.40,539.69 L585.90,536.92 L586.40,533.73 L586.90,530.15 L587.40,526.20 L587.90,521.91 L588.40,517.32 L588.90,512.46 L589.40,507.37 L589.90,502.09 L590.40,496.65 L590.90,491.10 L591.40,485.48 L591.90,479.84 L592.40,474.20 L592.90,468.63 L593.40,463.16 L593.90,457.82 L594.40,452.67 L594.90,447.73 L595.40,443.05 L595.90,438.66 L596.40,434.60 L596.90,430.88 L597.40,427.54 L597.90,424.61 L598.40,422.11 L598.90,420.04 L599.40,418.44 L599.90,417.30 L600.40,416.64 L600.90,416.46 L601.40,416.76 L601.90,417.54 L602.40,418.79 L602.90,420.50 L603.40,422.66 L603.90,425.25 L604.40,428.25 L604.90,431.64 L605.40,435.38 L605.90,439.46 L606.40,443.84 L606.90,448.48 L607.40,453.36 L607.90,458.42 L608.40,463.65 L608.90,468.99 L609.40,474.40 L609.90,479.85 L610.40,485.30 L610.90,490.70 L611.40,496.00 L611.90,501.19 L612.40,506.20 L612.90,511.01 L613.40,515.58 L613.90,519.88 L614.40,523.87 L614.90,527.53 L615.40,530.83 L615.90,533.74 L616.40,536.25 L616.90,538.33 L617.40,539.97 L617.90,541.16 L618.40,541.89 L618.90,542.15 L619.40,541.95 L619.90,541.29 L620.40,540.17 L620.90,538.61 L621.40,536.61 L621.90,534.19 L622.40,531.37 L622.90,528.17 L623.40,524.62 L623.90,520.75 L624.40,516.58 L624.90,512.14 L625.40,507.48 L625.90,502.62 L626.40,497.60 L626.90,492.46 L627.40,487.24 L627.90,481.98 L628.40,476.72 L628.90,471.49 L629.40,466.35 L629.90,461.32 L630.40,456.44 L630.90,451.75 L631.40,447.28 L631.90,443.08 L632.40,439.16 L632.90,435.56 L633.40,432.30 L633.90,429.42 L634.40,426.92 L634.90,424.82 L635.40,423.15 L635.90,421.92 L636.40,421.12 L636.90,420.78 L637.40,420.88 L637.90,421.43 L638.40,422.42 L638.90,423.85 L639.40,425.70 L639.90,427.95 L640.40,430.60 L640.90,433.62 L641.40,436.98 L641.90,440.66 L642.40,444.63 L642.90,448.87 L643.40,453.33 L643.90,457.99 L644.40,462.81 L644.90,467.75 L645.40,472.78 L645.90,477.86 L646.40,482.94 L646.90,488.00 L647.40,492.99 L647.90,497.87 L648.40,502.61 L648.90,507.18 L649.40,511.54 L649.90,515.65 L650.40,519.50 L650.90,523.04 L651.40,526.25 L651.90,529.11 L652.40,531.60 L652.90,533.70 L653.40,535.40 L653.90,536.68 L654.40,537.53 L654.90,537.95 L655.40,537.94 L655.90,537.49 L656.40,536.62 L656.90,535.33 L657.40,533.62 L657.90,531.52 L658.40,529.04 L658.90,526.19 L659.40,523.01 L659.90,519.51 L660.40,515.73 L660.90,511.69 L661.40,507.42 L661.90,502.95 L662.40,498.33 L662.90,493.58 L663.40,488.73 L663.90,483.84 L664.40,478.93 L664.90,474.04 L665.40,469.20 L665.90,464.46 L666.40,459.85 L666.90,455.40 L667.40,451.15 L667.90,447.13 L668.40,443.36 L668.90,439.88 L669.40,436.71 L669.90,433.88 L670.40,431.40 L670.90,429.30 L671.40,427.58 L671.90,426.26 L672.40,425.36 L672.90,424.87 L673.40,424.79 L673.90,425.14 L674.40,425.90 L674.90,427.07 L675.40,428.64 L675.90,430.59 L676.40,432.92 L676.90,435.60 L677.40,438.61 L677.90,441.92 L678.40,445.53 L678.90,449.38 L679.40,453.46 L679.90,457.74 L680.40,462.18 L680.90,466.75 L681.40,471.41 L681.90,476.13 L682.40,480.87 L682.90,485.61 L683.40,490.29 L683.90,494.89 L684.40,499.37 L684.90,503.70 L685.40,507.84 L685.90,511.78 L686.40,515.47 L686.90,518.88 L687.40,522.00 L687.90,524.81 L688.40,527.27 L688.90,529.38 L689.40,531.11 L689.90,532.46 L690.40,533.42 L690.90,533.97 L691.40,534.12 L691.90,533.87 L692.40,533.21 L692.90,532.16 L693.40,530.72 L693.90,528.91 L694.40,526.73 L694.90,524.21 L695.40,521.37 L695.90,518.22 L696.40,514.80 L696.90,511.12 L697.40,507.22 L697.90,503.12 L698.40,498.86 L698.90,494.47 L699.40,489.99 L699.90,485.44 L700.40,480.86 L700.90,476.28 L701.40,471.75 L701.90,467.29 L702.40,462.94 L702.90,458.72 L703.40,454.68 L703.90,450.84 L704.40,447.23 L704.90,443.87 L705.40,440.80 L705.90,438.03 L706.40,435.58 L706.90,433.48 L707.40,431.73 L707.90,430.35 L708.40,429.35 L708.90,428.74 L709.40,428.51 L709.90,428.68 L710.40,429.24 L710.90,430.18 L711.40,431.49 L711.90,433.17 L712.40,435.20 L712.90,437.57 L713.40,440.26 L713.90,443.24 L714.40,446.50 L714.90,450.00 L715.40,453.73 L715.90,457.65 L716.40,461.73 L716.90,465.95 L717.40,470.27 L717.90,474.65 L718.40,479.07 L718.90,483.49 L719.40,487.88 L719.90,492.21 L720.40,496.44 L720.90,500.53 L721.40,504.47 L721.90,508.23 L722.40,511.76 L722.90,515.05 L723.40,518.08 L723.90,520.81 L724.40,523.24 L724.90,525.34 L725.40,527.10 L725.90,528.50 L726.40,529.54 L726.90,530.21 L727.40,530.50 L727.90,530.41 L728.40,529.95 L728.90,529.12 L729.40,527.92 L729.90,526.36 L730.40,524.47 L730.90,522.25 L731.40,519.71 L731.90,516.89 L732.40,513.79 L732.90,510.45 L733.40,506.89 L733.90,503.14 L734.40,499.23 L734.90,495.18 L735.40,491.03 L735.90,486.80 L736.40,482.54 L736.90,478.26 L737.40,474.02 L737.90,469.82 L738.40,465.72 L738.90,461.73 L739.40,457.90 L739.90,454.24 L740.40,450.78 L740.90,447.55 L741.40,444.57 L741.90,441.88 L742.40,439.47 L742.90,437.38 L743.40,435.61 L743.90,434.19 L744.40,433.11 L744.90,432.40 L745.40,432.04 L745.90,432.05 L746.40,432.43 L746.90,433.16 L747.40,434.25 L747.90,435.68 L748.40,437.45 L748.90,439.53 L749.40,441.92 L749.90,444.60 L750.40,447.53 L750.90,450.71 L751.40,454.11 L751.90,457.70 L752.40,461.45 L752.90,465.34 L753.40,469.33 L753.90,473.40 L754.40,477.51 L754.90,481.64 L755.40,485.75 L755.90,489.81 L756.40,493.79 L756.90,497.67 L757.40,501.40 L757.90,504.98 L758.40,508.36 L758.90,511.52 L759.40,514.45 L759.90,517.11 L760.40,519.49 L760.90,521.57 L761.40,523.34 L761.90,524.78 L762.40,525.89 L762.90,526.65 L763.40,527.06 L763.90,527.12 L764.40,526.83 L764.90,526.19 L765.40,525.21 L765.90,523.89 L766.40,522.25 L766.90,520.30 L767.40,518.05 L767.90,515.52 L768.40,512.73 L768.90,509.70 L769.40,506.46 L769.90,503.03 L770.40,499.44 L770.90,495.71 L771.40,491.87 L771.90,487.95 L772.40,483.99 L772.90,480.00 L773.40,476.03 L773.90,472.09 L774.40,468.23 L774.90,464.46 L775.40,460.82 L775.90,457.34 L776.40,454.04 L776.90,450.94 L777.40,448.06 L777.90,445.44 L778.40,443.09 L778.90,441.02 L779.40,439.25 L779.90,437.79 L780.40,436.65 L780.90,435.85 L781.40,435.39 L781.90,435.26 L782.40,435.47 L782.90,436.02 L783.40,436.91 L783.90,438.12 L784.40,439.64 L784.90,441.47 L785.40,443.58 L785.90,445.97 L786.40,448.62 L786.90,451.50 L787.40,454.59 L787.90,457.87 L788.40,461.31 L788.90,464.89 L789.40,468.57 L789.90,472.34 L790.40,476.17 L790.90,480.01 L791.40,483.86 L791.90,487.67 L792.40,491.42 L792.90,495.07 L793.40,498.62 L793.90,502.01 L794.40,505.24 L794.90,508.27 L795.40,511.09 L795.90,513.68 L796.40,516.00 L796.90,518.06 L797.40,519.83 L797.90,521.30 L798.40,522.46 L798.90,523.29 L799.40,523.81 L799.90,524.00 L800.40,523.86 L800.90,523.39 L801.40,522.60 L801.90,521.50 L802.40,520.08 L802.90,518.38 L803.40,516.39 L803.90,514.13 L804.40,511.62 L804.90,508.89 L805.40,505.94 L805.90,502.81 L806.40,499.52 L806.90,496.08 L807.40,492.54 L807.90,488.91 L808.40,485.23 L808.90,481.52 L809.40,477.80 L809.90,474.11 L810.40,470.48 L810.90,466.93 L811.40,463.48 L811.90,460.17 L812.40,457.02 L812.90,454.05 L813.40,451.28 L813.90,448.74 L814.40,446.44 L814.90,444.40 L815.40,442.64 L815.90,441.16 L816.40,439.98 L816.90,439.11 L817.40,438.55 L817.90,438.30 L818.40,438.38 L818.90,438.76 L819.40,439.46 L819.90,440.47 L820.40,441.78 L820.90,443.37 L821.40,445.24 L821.90,447.37 L822.40,449.74 L822.90,452.34 L823.40,455.15 L823.90,458.14 L824.40,461.29 L824.90,464.58 L825.40,467.98 L825.90,471.47 L826.40,475.02 L826.90,478.60 L827.40,482.19 L827.90,485.76 L828.40,489.29 L828.90,492.73 L829.40,496.08 L829.90,499.31 L830.40,502.39 L830.90,505.29 L831.40,508.00 L831.90,510.50 L832.40,512.77 L832.90,514.79 L833.40,516.55 L833.90,518.03 L834.40,519.23 L834.90,520.13 L835.40,520.74 L835.90,521.03 L836.40,521.02 L836.90,520.71 L837.40,520.09 L837.90,519.18 L838.40,517.98 L838.90,516.49 L839.40,514.74 L839.90,512.73 L840.40,510.49 L840.90,508.02 L841.40,505.35 L841.90,502.49 L842.40,499.48 L842.90,496.32 L843.40,493.06 L843.90,489.70 L844.40,486.28 L844.90,482.83 L845.40,479.36 L845.90,475.91 L846.40,472.49 L846.90,469.15 L847.40,465.89 L847.90,462.75 L848.40,459.75 L848.90,456.91 L849.40,454.25 L849.90,451.79 L850.40,449.56 L850.90,447.55 L851.40,445.81 L851.90,444.32 L852.40,443.11 L852.90,442.18 L853.40,441.54 L853.90,441.19 L854.40,441.14 L854.90,441.38 L855.40,441.92 L855.90,442.75 L856.40,443.85 L856.90,445.23 L857.40,446.88 L857.90,448.77 L858.40,450.89 L858.90,453.23 L859.40,455.78 L859.90,458.50 L860.40,461.38 L860.90,464.40 L861.40,467.54 L861.90,470.76 L862.40,474.05 L862.90,477.39 L863.40,480.73 L863.90,484.07 L864.40,487.38 L864.90,490.63 L865.40,493.79 L865.90,496.85 L866.40,499.78 L866.90,502.55 L867.40,505.16 L867.90,507.57 L868.40,509.78 L868.90,511.75 L869.40,513.49 L869.90,514.98 L870.40,516.21 L870.90,517.16 L871.40,517.83 L871.90,518.22 L872.40,518.33 L872.90,518.15 L873.40,517.69 L873.90,516.95 L874.40,515.93 L874.90,514.65 L875.40,513.11 L875.90,511.33 L876.40,509.33 L876.90,507.10 L877.40,504.69 L877.90,502.09 L878.40,499.34 L878.90,496.44 L879.40,493.44 L879.90,490.34 L880.40,487.17 L880.90,483.96 L881.40,480.72 L881.90,477.49 L882.40,474.29 L882.90,471.14 L883.40,468.07 L883.90,465.09 L884.40,462.24 L884.90,459.53 L885.40,456.98 L885.90,454.61 L886.40,452.44 L886.90,450.48 L887.40,448.76 L887.90,447.27 L888.40,446.04 L888.90,445.06 L889.40,444.36 L889.90,443.92 L890.40,443.77 L890.90,443.88 L891.40,444.28 L891.90,444.94 L892.40,445.87 L892.90,447.05 L893.40,448.49 L893.90,450.16 L894.40,452.06 L894.90,454.16 L895.40,456.46 L895.90,458.94 L896.40,461.57 L896.90,464.34 L897.40,467.22 L897.90,470.20 L898.40,473.25 L898.90,476.34 L899.40,479.46 L899.90,482.58 L900.40,485.68 L900.90,488.74 L901.40,491.72 L901.90,494.62 L902.40,497.40 L902.90,500.05 L903.40,502.54 L903.90,504.87 L904.40,507.00 L904.90,508.93 L905.40,510.65 L905.90,512.13 L906.40,513.37 L906.90,514.36 L907.40,515.09 L907.90,515.57 L908.40,515.77 L908.90,515.71 L909.40,515.39 L909.90,514.80 L910.40,513.95 L910.90,512.85 L911.40,511.51 L911.90,509.94 L912.40,508.16 L912.90,506.16 L913.40,503.98 L913.90,501.62 L914.40,499.11 L914.90,496.46 L915.40,493.69 L915.90,490.83 L916.40,487.90 L916.90,484.92 L917.40,481.91 L917.90,478.89 L918.40,475.89 L918.90,472.93 L919.40,470.04 L919.90,467.22 L920.40,464.51 L920.90,461.93 L921.40,459.49 L921.90,457.21 L922.40,455.11 L922.90,453.20 L923.40,451.50 L923.90,450.02 L924.40,448.78 L924.90,447.77 L925.40,447.01 L925.90,446.51 L926.40,446.26 L926.90,446.26 L927.40,446.53 L927.90,447.05 L928.40,447.81 L928.90,448.83 L929.40,450.07 L929.90,451.55 L930.40,453.23 L930.90,455.12 L931.40,457.19 L931.90,459.44 L932.40,461.84 L932.90,464.37 L933.40,467.02 L933.90,469.76 L934.40,472.58 L934.90,475.46 L935.40,478.36 L935.90,481.27 L936.40,484.18 L936.90,487.04 L937.40,489.86 L937.90,492.59 L938.40,495.23 L938.90,497.75 L939.40,500.14 L939.90,502.37 L940.40,504.44 L940.90,506.32 L941.40,508.00 L941.90,509.47 L942.40,510.72 L942.90,511.74 L943.40,512.52 L943.90,513.06 L944.40,513.35 L944.90,513.39 L945.40,513.18 L945.90,512.73 L946.40,512.04 L946.90,511.11 L947.40,509.95 L947.90,508.57 L948.40,506.98 L948.90,505.19 L949.40,503.23 L949.90,501.09 L950.40,498.80 L950.90,496.38 L951.40,493.84" fill="none" stroke="#3f1d1d" stroke-width="1.45"/><line x1="391" y1="482.2" x2="418" y2="482.2" stroke="#d04040" stroke-width="0.9"/></svg><div class="s" style="right:1196.8px;top:566.6px;font-size:5.4px;color:#1a1a1a;-webkit-text-stroke:0.15px #1a1a1a;letter-spacing:-0.1px">0,68</div><div class="s" style="right:1196.8px;top:556.1px;font-size:5.4px;color:#1a1a1a;-webkit-text-stroke:0.15px #1a1a1a;letter-spacing:-0.1px">0,70</div><div class="s" style="right:1196.8px;top:545.5px;font-size:5.4px;color:#1a1a1a;-webkit-text-stroke:0.15px #1a1a1a;letter-spacing:-0.1px">0,72</div><div class="s" style="right:1196.8px;top:535.0px;font-size:5.4px;color:#1a1a1a;-webkit-text-stroke:0.15px #1a1a1a;letter-spacing:-0.1px">0,74</div><div class="s" style="right:1196.8px;top:524.5px;font-size:5.4px;color:#1a1a1a;-webkit-text-stroke:0.15px #1a1a1a;letter-spacing:-0.1px">0,76</div><div class="s" style="right:1196.8px;top:514.0px;font-size:5.4px;color:#1a1a1a;-webkit-text-stroke:0.15px #1a1a1a;letter-spacing:-0.1px">0,78</div><div class="s" style="right:1196.8px;top:503.4px;font-size:5.4px;color:#1a1a1a;-webkit-text-stroke:0.15px #1a1a1a;letter-spacing:-0.1px">0,80</div><div class="s" style="right:1196.8px;top:492.9px;font-size:5.4px;color:#1a1a1a;-webkit-text-stroke:0.15px #1a1a1a;letter-spacing:-0.1px">0,82</div><div class="s" style="right:1196.8px;top:482.4px;font-size:5.4px;color:#1a1a1a;-webkit-text-stroke:0.15px #1a1a1a;letter-spacing:-0.1px">0,84</div><div class="s" style="right:1196.8px;top:471.8px;font-size:5.4px;color:#1a1a1a;-webkit-text-stroke:0.15px #1a1a1a;letter-spacing:-0.1px">0,86</div><div class="s" style="right:1196.8px;top:461.3px;font-size:5.4px;color:#1a1a1a;-webkit-text-stroke:0.15px #1a1a1a;letter-spacing:-0.1px">0,88</div><div class="s" style="right:1196.8px;top:450.8px;font-size:5.4px;color:#1a1a1a;-webkit-text-stroke:0.15px #1a1a1a;letter-spacing:-0.1px">0,90</div><div class="s" style="right:1196.8px;top:440.2px;font-size:5.4px;color:#1a1a1a;-webkit-text-stroke:0.15px #1a1a1a;letter-spacing:-0.1px">0,92</div><div class="s" style="right:1196.8px;top:429.7px;font-size:5.4px;color:#1a1a1a;-webkit-text-stroke:0.15px #1a1a1a;letter-spacing:-0.1px">0,94</div><div class="s" style="right:1196.8px;top:419.2px;font-size:5.4px;color:#1a1a1a;-webkit-text-stroke:0.15px #1a1a1a;letter-spacing:-0.1px">0,96</div><div class="s" style="right:1196.8px;top:408.7px;font-size:5.4px;color:#1a1a1a;-webkit-text-stroke:0.15px #1a1a1a;letter-spacing:-0.1px">0,98</div><div class="s" style="right:1196.8px;top:398.1px;font-size:5.4px;color:#1a1a1a;-webkit-text-stroke:0.15px #1a1a1a;letter-spacing:-0.1px">1,00</div><div class="s" style="right:1196.8px;top:387.6px;font-size:5.4px;color:#1a1a1a;-webkit-text-stroke:0.15px #1a1a1a;letter-spacing:-0.1px">1,02</div><div class="s" style="left:454.3px;width:12px;text-align:center;top:578.6px;font-size:5.4px;color:#1a1a1a;-webkit-text-stroke:0.12px #1a1a1a">0,05</div><div class="s" style="left:540.9200000000001px;width:12px;text-align:center;top:578.6px;font-size:5.4px;color:#1a1a1a;-webkit-text-stroke:0.12px #1a1a1a">0,10</div><div class="s" style="left:627.54px;width:12px;text-align:center;top:578.6px;font-size:5.4px;color:#1a1a1a;-webkit-text-stroke:0.12px #1a1a1a">0,15</div><div class="s" style="left:714.1600000000001px;width:12px;text-align:center;top:578.6px;font-size:5.4px;color:#1a1a1a;-webkit-text-stroke:0.12px #1a1a1a">0,20</div><div class="s" style="left:800.78px;width:12px;text-align:center;top:578.6px;font-size:5.4px;color:#1a1a1a;-webkit-text-stroke:0.12px #1a1a1a">0,25</div><div class="s" style="left:887.4000000000001px;width:12px;text-align:center;top:578.6px;font-size:5.4px;color:#1a1a1a;-webkit-text-stroke:0.12px #1a1a1a">0,30</div><div class="s" style="left:935.5px;top:567px;font-size:6px;color:#1a1a1a;-webkit-text-stroke:0.12px #1a1a1a">t (min)</div><div class="s" style="left:410px;top:383px;font-size:5.6px;color:#111;font-weight:bold">s (m)</div><div class="s" style="left:410px;top:391px;font-size:5.4px;color:#c03030;-webkit-text-stroke:0.12px #c03030">Fit von s(t) (m)</div><div class="s" style="left:410px;top:398.8px;font-size:5.4px;color:#237a30;-webkit-text-stroke:0.12px #237a30">A_o(t) (Obere Einhüllende) (m)</div><div class="s" style="left:410px;top:406.8px;font-size:5.4px;color:#237a30;-webkit-text-stroke:0.12px #237a30">A_u(t) (Untere Einhüllende) (m)</div><svg class="a" style="left:0;top:0" width="1600" height="623" viewBox="0 0 1600 623"><line x1="412.7" y1="118" x2="412.7" y2="133" stroke="#c9c9c9" stroke-width="1"/><line x1="436.2" y1="118" x2="436.2" y2="133" stroke="#c9c9c9" stroke-width="1"/><line x1="479.3" y1="118" x2="479.3" y2="133" stroke="#c9c9c9" stroke-width="1"/><line x1="502.8" y1="118" x2="502.8" y2="133" stroke="#c9c9c9" stroke-width="1"/><line x1="545" y1="118" x2="545" y2="133" stroke="#c9c9c9" stroke-width="1"/><line x1="607.4" y1="118" x2="607.4" y2="133" stroke="#c9c9c9" stroke-width="1"/><line x1="778" y1="118" x2="778" y2="133" stroke="#c9c9c9" stroke-width="1"/><g fill="#e9edf3" stroke="#3f5684" stroke-width="1.4" stroke-linejoin="round"><path d="M341.8 122.5 v-3.5 q0 -1 1 -1 h6.4 q1 0 1 1 v12.8 q0 1 -1 1 h-6.4 q-1 0 -1 -1 v-3.6"/></g><path d="M335 125.3 l2.6 -2.6 l2.6 2.6 l-2.6 2.6 z" fill="#2c4a70"/><circle cx="337.6" cy="125.3" r="0.9" fill="#9fd0f0"/><line x1="340" y1="125.3" x2="342" y2="125.3" stroke="#2c4a70" stroke-width="1.2"/><path d="M355.3 123 q0 -1 1 -1 h2.5 l1.2 1.2 h9 q0.8 0 0.8 0.8 v8.2 q0 1 -1 1 h-12.5 q-1 0 -1 -1 z" fill="#e9edf3" stroke="#3f5684" stroke-width="1.4" stroke-linejoin="round"/><path d="M363.90000000000003 121.3 l3 -3.3 l3 3.3 l-1.3 0.3 v1.2 h-3.4 v-1.2 z" fill="#2c4a70"/><rect x="366.2" y="120.4" width="1.4" height="1.6" fill="#9fd0f0"/><path d="M374.6 123 q0 -1 1 -1 h2.5 l1.2 1.2 h9 q0.8 0 0.8 0.8 v8.2 q0 1 -1 1 h-12.5 q-1 0 -1 -1 z" fill="#e9edf3" stroke="#3f5684" stroke-width="1.4" stroke-linejoin="round"/><path d="M383.20000000000005 121.3 l3 -3.3 l3 3.3 l-1.3 0.3 v1.2 h-3.4 v-1.2 z" fill="#2c4a70"/><rect x="385.5" y="120.4" width="1.4" height="1.6" fill="#9fd0f0"/><text x="377" y="131.2" font-size="3.8" font-weight="bold" fill="#2a3a5a" font-family="Liberation Sans">CMA</text><g fill="#e9edf3" stroke="#3f5684" stroke-width="1.4" stroke-linejoin="round"><path d="M394 119.5 q0 -1 1 -1 h11 l2.4 2.4 v10.6 q0 1 -1 1 h-12.4 q-1 0 -1 -1 z"/><path d="M397 118.5 v4.5 h8.5 v-4.5" fill="none"/><rect x="396.8" y="126.8" width="9" height="5.7"/></g><rect x="401.8" y="119.2" width="1.5" height="2.6" fill="#1a2a4a"/><g fill="none" stroke="#3f5684" stroke-width="1.5" stroke-linejoin="round"><rect x="420" y="118.5" width="9" height="4"/><path d="M417 123 h15 v6 h-3 M420 129 h-3 v-6"/><rect x="420" y="127" width="9" height="5.5"/></g><rect x="440.3" y="118" width="15.5" height="15.3" fill="#a8d8f4" stroke="#4b8eae" stroke-width="1.5"/><g fill="none" stroke="#2b3470" stroke-width="1.1"><path d="M442.5 120 l2.5 2.2 l-2.5 2.2"/><circle cx="444" cy="129.5" r="1.6"/></g><path d="M450.5 119 v3 M450.5 129 v3.5" stroke="#2b3470" stroke-width="1"/><ellipse cx="450.5" cy="125.5" rx="1.8" ry="3.5" fill="#2b3470"/><rect x="459.5" y="118" width="15.5" height="15.3" fill="#a8d8f4" stroke="#4b8eae" stroke-width="1.5"/><rect x="462.8" y="121" width="9.2" height="9.5" fill="#8a86c8"/><rect x="462.8" y="121" width="9.2" height="2" fill="#2b3470"/><rect x="462.8" y="121" width="1.3" height="9.5" fill="#2b3470"/><rect x="465.2" y="121" width="1.3" height="9.5" fill="#2b3470"/><rect x="467.6" y="121" width="1.3" height="9.5" fill="#2b3470"/><rect x="470" y="121" width="1.3" height="9.5" fill="#2b3470"/><rect x="462.8" y="129.5" width="9.2" height="1" fill="#2b3470"/><g fill="none" stroke="#3b4a62" stroke-width="1.3"><circle cx="490.8" cy="127" r="5.9"/><path d="M486 121.5 l1.2 1.2 M495.6 121.5 l-1.2 1.2" stroke-width="1.5"/><path d="M488.6 123.8 l2.2 3.2 l2.6 -2" stroke-width="1.4"/></g><circle cx="490.6" cy="118.6" r="1.3" fill="#3b4a62"/><g fill="none" stroke="#6f9452" stroke-width="1.15"><circle cx="513.8" cy="125.5" r="7"/><path d="M512.3 121.8 v7.4 l5.3 -3.7 z" stroke-linejoin="round"/><path d="M538.7 121 A7 7 0 1 1 533 118.4"/></g><path d="M536.3 118.6 l4 -0.8 l-0.8 4 z" fill="#5f7f48"/><rect x="549.5" y="118.3" width="15.2" height="14.8" rx="1.2" fill="#f7eff7" stroke="#64305f" stroke-width="1.5"/><rect x="568.8" y="118.3" width="15.2" height="14.8" rx="1.2" fill="#f7eff7" stroke="#64305f" stroke-width="1.5"/><rect x="588" y="118.3" width="15.2" height="14.8" rx="1.2" fill="#f7eff7" stroke="#64305f" stroke-width="1.5"/><path d="M552.3 121.5 v8.8 h10 M552.5 125.3 q2.2 -2.6 4 0 q2 2.8 4 0.4 q1.2 -1.5 1.8 -2" fill="none" stroke="#64305f" stroke-width="0.95"/><path d="M571.4 124.4 q1.2 -2.9 5.4 -2.9 q4.2 0 5.4 2.9 l-5.4 5.2 z" fill="none" stroke="#64305f" stroke-width="1.05"/><path d="M574.3 123.5 l2.5 5.5 M576.8 122 l1.5 2" fill="none" stroke="#a070a0" stroke-width="0.6"/><ellipse cx="591.2" cy="125.7" rx="1.1" ry="2.15" fill="none" stroke="#64305f" stroke-width="1.3"/><circle cx="593.6" cy="127.6" r="0.55" fill="#64305f"/><ellipse cx="596.2" cy="125.7" rx="1.1" ry="2.15" fill="none" stroke="#64305f" stroke-width="1.3"/><ellipse cx="599.6" cy="125.7" rx="1.1" ry="2.15" fill="none" stroke="#64305f" stroke-width="1.3"/><rect x="611.3" y="118.5" width="15.5" height="14.8" rx="1.6" fill="#f4f4fa" stroke="#2e3262" stroke-width="1.5"/><path d="M629.1999999999999 123.9 h5 l-2.5 4 z" fill="#25285a"/><rect x="638.9" y="118.5" width="15.5" height="14.8" rx="1.6" fill="#f4f4fa" stroke="#2e3262" stroke-width="1.5"/><path d="M656.8 123.9 h5 l-2.5 4 z" fill="#25285a"/><rect x="667" y="118.5" width="15.5" height="14.8" rx="1.6" fill="#f4f4fa" stroke="#2e3262" stroke-width="1.5"/><path d="M684.9 123.9 h5 l-2.5 4 z" fill="#25285a"/><rect x="695.2" y="118.5" width="15.5" height="14.8" rx="1.6" fill="#f4f4fa" stroke="#2e3262" stroke-width="1.5"/><path d="M713.1 123.9 h5 l-2.5 4 z" fill="#25285a"/><rect x="722.7" y="118.5" width="15.5" height="14.8" rx="1.6" fill="#f4f4fa" stroke="#2e3262" stroke-width="1.5"/><path d="M740.6 123.9 h5 l-2.5 4 z" fill="#25285a"/><rect x="750.2" y="118.5" width="15.5" height="14.8" rx="1.6" fill="#f4f4fa" stroke="#2e3262" stroke-width="1.5"/><path d="M768.1 123.9 h5 l-2.5 4 z" fill="#25285a"/><path d="M614.3 125.6 q1.2 -0.6 2.4 -0.4 q1 -1.2 3 -1 q1.5 0.1 2.2 -1.2 q0.6 -1 1.6 -0.8 l0.9 0.6 l-0.4 0.9 l-0.9 -0.2 q-0.2 1.8 -1 2.8 l0.5 2.2 h-0.9 l-0.7 -1.6 h-2.2 l-0.6 1.6 h-0.9 l0.2 -1.8 q-1.2 -0.2 -1.6 -0.9 q-0.8 0 -1.6 0.3 z" fill="#2b3470"/><g transform="rotate(-48 646.8 125.7)"><rect x="641.8" y="122.7" width="10" height="6" rx="1.2" fill="#eceef8" stroke="#2b3470" stroke-width="1"/><line x1="645" y1="122.7" x2="645" y2="128.7" stroke="#2b3470" stroke-width="0.8"/></g><rect x="669.6" y="121" width="10.2" height="8.6" fill="#d0d4ea" stroke="#2b3470" stroke-width="1"/><rect x="671" y="122.3" width="7.4" height="2.4" fill="#f4f4fa"/><rect x="671" y="126.2" width="7.4" height="2" fill="#f4f4fa"/><path d="M671.5 127.5 h2 l1 -0.8 h3" stroke="#2b3470" stroke-width="0.7" fill="none"/><rect x="697.8" y="121.8" width="10.5" height="8" fill="#2f3f95"/><circle cx="730.5" cy="125.7" r="4.4" fill="#9aa0c8" stroke="#2b3470" stroke-width="0.9"/><path d="M728.5 122.5 l1.5 2 l-1 2 l2 2.5" fill="none" stroke="#2b3470" stroke-width="0.9"/><path d="M753.5 121 h4.5 l3.5 3.5 v6.5 h-8 z" fill="#b9bddb" stroke="#2b3470" stroke-width="0.9"/><circle cx="790" cy="125.8" r="6.8" fill="#fff" stroke="#b52f45" stroke-width="1.3"/><path d="M787.6 123.6 q0 -2.6 2.5 -2.6 q2.5 0 2.5 2.3 q0 1.4 -1.5 2.1 q-1 0.5 -1 1.9 v0.5" fill="none" stroke="#8e2236" stroke-width="1.4"/><circle cx="790.1" cy="129.6" r="0.85" fill="#8e2236"/></svg><svg class="a" style="left:0;top:0" width="1600" height="623" viewBox="0 0 1600 623"><defs><radialGradient id="cg" cx="0.5" cy="0.45" r="0.55"><stop offset="0" stop-color="#f8f8fa"/><stop offset="0.8" stop-color="#f0f0f3"/><stop offset="1" stop-color="#e2e2e8"/></radialGradient><radialGradient id="sb" cx="0.4" cy="0.35" r="0.6"><stop offset="0" stop-color="#2e3f8a"/><stop offset="1" stop-color="#18245e"/></radialGradient></defs><ellipse cx="1155" cy="235.5" rx="72.5" ry="69.5" fill="url(#cg)" stroke="#c9cad2" stroke-width="0.9"/><path d="M1115.5 200 Q1122 183.5 1154 182.5 Q1186 183.5 1193 200 z" fill="#8098cc"/><text x="1154" y="196.5" font-size="8.6" fill="#eef2fb" text-anchor="middle" font-family="Liberation Sans" font-variant="small-caps" letter-spacing="0.2">CoachLab II+</text><rect x="1093" y="193.5" width="21.5" height="16" fill="#9ccb98" stroke="#6fa86a" stroke-width="0.6"/><rect x="1101" y="194.5" width="5.5" height="8" rx="1" fill="#2a3456"/><text x="1093.8" y="201.5" font-size="4" font-weight="bold" fill="#1a2a1a" font-family="Liberation Sans">d+</text><text x="1093.8" y="207.8" font-size="4" font-weight="bold" fill="#1a2a1a" font-family="Liberation Sans">0.0dm</text><rect x="1199" y="201" width="12" height="4.5" fill="#2a2a2a"/><rect x="1200.5" y="202" width="9" height="2" fill="#7fa07f"/><rect x="1148.5" y="202" width="11.5" height="70" fill="#f9f9fa" stroke="#dcdce2" stroke-width="0.5"/><rect x="1149" y="209.9" width="10.5" height="5" fill="#8f9184"/><rect x="1138" y="208.3" width="11" height="8.4" fill="#a9b6de"/><rect x="1159.5" y="208.3" width="11" height="8.4" fill="#a9b6de"/><circle cx="1136.2" cy="212.5" r="5.4" fill="url(#sb)"/><circle cx="1171.5" cy="212.5" r="5.4" fill="url(#sb)"/><circle cx="1136.2" cy="212.5" r="2.3" fill="none" stroke="#4a60a8" stroke-width="0.7"/><circle cx="1171.5" cy="212.5" r="2.3" fill="none" stroke="#4a60a8" stroke-width="0.7"/><rect x="1149" y="226.9" width="10.5" height="5" fill="#8f9184"/><rect x="1138" y="225.3" width="11" height="8.4" fill="#a9b6de"/><rect x="1159.5" y="225.3" width="11" height="8.4" fill="#a9b6de"/><circle cx="1136.2" cy="229.5" r="5.4" fill="url(#sb)"/><circle cx="1171.5" cy="229.5" r="5.4" fill="url(#sb)"/><circle cx="1136.2" cy="229.5" r="2.3" fill="none" stroke="#4a60a8" stroke-width="0.7"/><circle cx="1171.5" cy="229.5" r="2.3" fill="none" stroke="#4a60a8" stroke-width="0.7"/><rect x="1149" y="243.70000000000002" width="10.5" height="5" fill="#8f9184"/><rect x="1138" y="242.10000000000002" width="11" height="8.4" fill="#a9b6de"/><rect x="1159.5" y="242.10000000000002" width="11" height="8.4" fill="#a9b6de"/><circle cx="1136.2" cy="246.3" r="5.4" fill="url(#sb)"/><circle cx="1171.5" cy="246.3" r="5.4" fill="url(#sb)"/><circle cx="1136.2" cy="246.3" r="2.3" fill="none" stroke="#4a60a8" stroke-width="0.7"/><circle cx="1171.5" cy="246.3" r="2.3" fill="none" stroke="#4a60a8" stroke-width="0.7"/><rect x="1149" y="260.5" width="10.5" height="5" fill="#8f9184"/><rect x="1138" y="258.90000000000003" width="11" height="8.4" fill="#a9b6de"/><rect x="1159.5" y="258.90000000000003" width="11" height="8.4" fill="#a9b6de"/><circle cx="1136.2" cy="263.1" r="5.4" fill="url(#sb)"/><circle cx="1171.5" cy="263.1" r="5.4" fill="url(#sb)"/><circle cx="1136.2" cy="263.1" r="2.3" fill="none" stroke="#4a60a8" stroke-width="0.7"/><circle cx="1171.5" cy="263.1" r="2.3" fill="none" stroke="#4a60a8" stroke-width="0.7"/><rect x="1105" y="225.8" width="9.5" height="8" fill="#abbde2"/><circle cx="1100" cy="229.8" r="5" fill="#a0202a" stroke="#555" stroke-width="0.5"/><rect x="1196" y="225.8" width="9.5" height="8" fill="#abbde2"/><circle cx="1209.5" cy="229.8" r="5" fill="#a0202a" stroke="#555" stroke-width="0.5"/><rect x="1104.5" y="241.5" width="9.5" height="8" fill="#abbde2"/><circle cx="1099.5" cy="245.5" r="5" fill="#d4a020" stroke="#555" stroke-width="0.5"/><circle cx="1099.5" cy="245.5" r="2.2" fill="none" stroke="#7a5a10" stroke-width="0.8"/><rect x="1196" y="241.5" width="9.5" height="8" fill="#abbde2"/><circle cx="1209.5" cy="245.5" r="5" fill="#d4a020" stroke="#555" stroke-width="0.5"/><circle cx="1209.5" cy="245.5" r="2.2" fill="none" stroke="#7a5a10" stroke-width="0.8"/><rect x="1110" y="259" width="9.5" height="8" fill="#abbde2"/><circle cx="1105" cy="263" r="5" fill="#111" stroke="#555" stroke-width="0.5"/><rect x="1190" y="259" width="9.5" height="8" fill="#abbde2"/><circle cx="1203.5" cy="263" r="5" fill="#111" stroke="#555" stroke-width="0.5"/><path d="M1120 280 h20 l-2 4 h-18 z" fill="#abbde2"/><rect x="1132.5" y="278.8" width="10" height="4.2" fill="#1a1a1a"/><rect x="1134.5" y="279.8" width="6" height="1.6" fill="#5a8a5a"/><path d="M1166 280 h22 l-4 4 h-18 z" fill="#abbde2"/><rect x="1164.5" y="278.8" width="10" height="4.2" fill="#1a1a1a"/><rect x="1166.5" y="279.8" width="6" height="1.6" fill="#5a8a5a"/><circle cx="1153.7" cy="279.5" r="2.4" fill="#2a8a50" stroke="#1a3a2a" stroke-width="0.6"/><text x="1153.7" y="291" font-size="4" fill="#777" text-anchor="middle" font-family="Liberation Serif" font-style="italic">CMA</text><rect x="1080.5" y="343.5" width="49.5" height="255.5" fill="#a9d4f0" stroke="#71899f" stroke-width="1.2"/><rect x="1080.8" y="344" width="2.8" height="254.5" fill="#88a8c0"/><rect x="1083.6" y="347.5" width="8.8" height="248" fill="#c3e1f5" stroke="#7f9ab2" stroke-width="0.6"/><line x1="1092.6" y1="349" x2="1092.6" y2="595" stroke="#1e2a36" stroke-width="1.1"/><line x1="1092.3" y1="594.20" x2="1100" y2="594.20" stroke="#111" stroke-width="1.6"/><line x1="1092.6" y1="581.97" x2="1097.5" y2="581.97" stroke="#5f7688" stroke-width="0.9"/><line x1="1092.3" y1="569.74" x2="1100" y2="569.74" stroke="#111" stroke-width="1.6"/><line x1="1092.6" y1="557.51" x2="1097.5" y2="557.51" stroke="#5f7688" stroke-width="0.9"/><line x1="1092.3" y1="545.28" x2="1100" y2="545.28" stroke="#111" stroke-width="1.6"/><line x1="1092.6" y1="533.05" x2="1097.5" y2="533.05" stroke="#5f7688" stroke-width="0.9"/><line x1="1092.3" y1="520.82" x2="1100" y2="520.82" stroke="#111" stroke-width="1.6"/><line x1="1092.6" y1="508.59" x2="1097.5" y2="508.59" stroke="#5f7688" stroke-width="0.9"/><line x1="1092.3" y1="496.36" x2="1100" y2="496.36" stroke="#111" stroke-width="1.6"/><line x1="1092.6" y1="484.13" x2="1097.5" y2="484.13" stroke="#5f7688" stroke-width="0.9"/><line x1="1092.3" y1="471.90" x2="1100" y2="471.90" stroke="#111" stroke-width="1.6"/><line x1="1092.6" y1="459.67" x2="1097.5" y2="459.67" stroke="#5f7688" stroke-width="0.9"/><line x1="1092.3" y1="447.44" x2="1100" y2="447.44" stroke="#111" stroke-width="1.6"/><line x1="1092.6" y1="435.21" x2="1097.5" y2="435.21" stroke="#5f7688" stroke-width="0.9"/><line x1="1092.3" y1="422.98" x2="1100" y2="422.98" stroke="#111" stroke-width="1.6"/><line x1="1092.6" y1="410.75" x2="1097.5" y2="410.75" stroke="#5f7688" stroke-width="0.9"/><line x1="1092.3" y1="398.52" x2="1100" y2="398.52" stroke="#111" stroke-width="1.6"/><line x1="1092.6" y1="386.29" x2="1097.5" y2="386.29" stroke="#5f7688" stroke-width="0.9"/><line x1="1092.3" y1="374.06" x2="1100" y2="374.06" stroke="#111" stroke-width="1.6"/><line x1="1092.6" y1="361.83" x2="1097.5" y2="361.83" stroke="#5f7688" stroke-width="0.9"/><line x1="1092.3" y1="349.60" x2="1100" y2="349.60" stroke="#111" stroke-width="1.6"/><text x="1101.2" y="596.20" font-size="6" font-weight="bold" fill="#111" font-family="Liberation Sans">0,0</text><text x="1101.2" y="571.74" font-size="6" font-weight="bold" fill="#111" font-family="Liberation Sans">0,2</text><text x="1101.2" y="547.28" font-size="6" font-weight="bold" fill="#111" font-family="Liberation Sans">0,4</text><text x="1101.2" y="522.82" font-size="6" font-weight="bold" fill="#111" font-family="Liberation Sans">0,6</text><text x="1101.2" y="498.36" font-size="6" font-weight="bold" fill="#111" font-family="Liberation Sans">0,8</text><text x="1101.2" y="473.90" font-size="6" font-weight="bold" fill="#111" font-family="Liberation Sans">1,0</text><text x="1101.2" y="449.44" font-size="6" font-weight="bold" fill="#111" font-family="Liberation Sans">1,2</text><text x="1101.2" y="424.98" font-size="6" font-weight="bold" fill="#111" font-family="Liberation Sans">1,4</text><text x="1101.2" y="400.52" font-size="6" font-weight="bold" fill="#111" font-family="Liberation Sans">1,6</text><text x="1101.2" y="376.06" font-size="6" font-weight="bold" fill="#111" font-family="Liberation Sans">1,8</text><text x="1101.2" y="351.60" font-size="6" font-weight="bold" fill="#111" font-family="Liberation Sans">2,0</text><path d="M1091.5 489.8 l-3.5 -2.8 v2 h-5.5 v1.6 h5.5 v2 z" fill="#a02a3a"/></svg><div class="s" style="left:1133px;top:551.5px;font-size:43px;color:#111">s (m)</div>
<div class="ln" style="left:294.6px;top:151.5px;width:1.5px;height:163.5px"></div><div class="ln" style="left:295.3px;top:232.2px;width:60.69999999999999px;height:1.5px"></div><div class="dot" style="left:354px;top:231px"></div><div class="ln" style="left:294.6px;top:396.5px;width:1.5px;height:162.0px"></div><div class="ln" style="left:295.3px;top:476.9px;width:60.69999999999999px;height:1.5px"></div><div class="dot" style="left:354px;top:475.6px"></div><div class="ln" style="left:1326.0px;top:151.5px;width:1.5px;height:163.5px"></div><div class="ln" style="left:1266px;top:232.2px;width:60.700000000000045px;height:1.5px"></div><div class="dot" style="left:1264px;top:231px"></div><div class="ln" style="left:1326.0px;top:464px;width:1.5px;height:61px"></div><div class="ln" style="left:1266px;top:493.9px;width:60.700000000000045px;height:1.5px"></div><div class="dot" style="left:1264px;top:492.7px"></div><div class="ln" style="left:385px;top:68.2px;width:156px;height:1.5px"></div><div class="ln" style="left:462.1px;top:69px;width:1.5px;height:44px"></div><div class="dot" style="left:460.8px;top:111px"></div><div class="ln" style="left:742px;top:68.2px;width:144px;height:1.5px"></div><div class="ln" style="left:784.6px;top:69px;width:1.5px;height:49px"></div></body></html>
